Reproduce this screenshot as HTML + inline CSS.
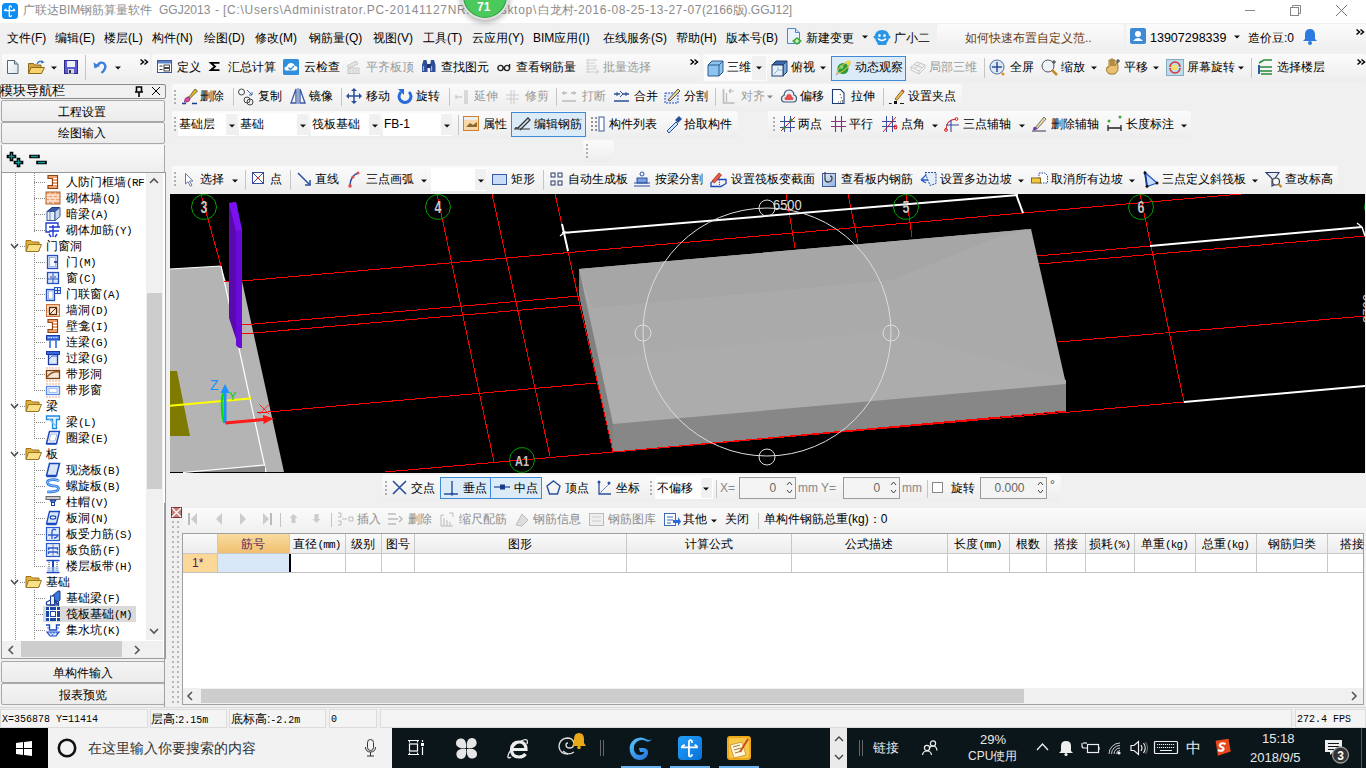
<!DOCTYPE html>
<html><head><meta charset="utf-8">
<style>
*{box-sizing:border-box;margin:0;padding:0}
html,body{width:1366px;height:768px;overflow:hidden;background:#f0f0f0;font-family:"Liberation Sans",sans-serif;font-size:12px;color:#000}
.a{position:absolute;white-space:nowrap}
.t{line-height:17px}
svg{overflow:visible}
</style></head><body>
<div class="a" style="left:0px;top:0px;width:1366px;height:23px;background:#fff"></div>
<svg class="a" style="left:2px;top:3px;" width="16" height="16" viewBox="0 0 16 16"><rect x="0" y="0" width="16" height="16" rx="3.5" fill="#0f8cf0"/><path d="M7.3 13V4.2q0-1.6 1.2-1.4q.9.2.9 1.3M7.3 12.5q0 1.2 1 1.1q.9-.1 1-1M2.5 7.6h10.2M2.5 7.6q.3-1.3 1.6-1.5M12.7 7.6q0-1.2-1.2-1.5" fill="none" stroke="#fff" stroke-width="1.3" stroke-linecap="round"/></svg>
<div class="a t" style="left:23px;top:2px;font-size:12px;color:#8c8c8c;">广联达BIM钢筋算量软件</div>
<div class="a t" style="left:159px;top:2px;font-size:12px;color:#8c8c8c;">GGJ2013</div>
<div class="a t" style="left:215px;top:2px;font-size:12px;color:#8c8c8c;">-</div>
<div class="a t" style="left:223px;top:2px;font-size:12px;color:#8c8c8c;letter-spacing:0.71px">[C:\Users\Administrator.PC-20141127NRHI\Desktop\</div>
<div class="a t" style="left:537.5px;top:2px;font-size:12px;color:#8c8c8c;">白龙村</div>
<div class="a t" style="left:573.5px;top:2px;font-size:12px;color:#8c8c8c;letter-spacing:0.55px">-2016-08-25-13-27-07</div>
<div class="a t" style="left:702px;top:2px;font-size:12px;color:#8c8c8c;">(2166</div>
<div class="a t" style="left:732.5px;top:2px;font-size:12px;color:#8c8c8c;">版</div>
<div class="a t" style="left:743.5px;top:2px;font-size:12px;color:#8c8c8c;">).GGJ12]</div>
<div class="a" style="left:1245px;top:10px;width:10px;height:1px;background:#888"></div>
<svg class="a" style="left:1290px;top:5px;" width="11" height="11" viewBox="0 0 11 11"><rect x="0.5" y="2.5" width="8" height="8" fill="none" stroke="#888"/><path d="M2.5 2.5v-2h8v8h-2" fill="none" stroke="#888"/></svg>
<svg class="a" style="left:1336px;top:5px;" width="11" height="11" viewBox="0 0 11 11"><path d="M0 0L11 11M11 0L0 11" stroke="#777" stroke-width="1"/></svg>
<div class="a" style="left:0px;top:23px;width:1366px;height:30px;background:#f0f0f0"></div>
<div class="a t" style="left:7px;top:30px;font-size:12px;color:#000;">文件(F)</div>
<div class="a t" style="left:55px;top:30px;font-size:12px;color:#000;">编辑(E)</div>
<div class="a t" style="left:104px;top:30px;font-size:12px;color:#000;">楼层(L)</div>
<div class="a t" style="left:152px;top:30px;font-size:12px;color:#000;">构件(N)</div>
<div class="a t" style="left:204px;top:30px;font-size:12px;color:#000;">绘图(D)</div>
<div class="a t" style="left:255px;top:30px;font-size:12px;color:#000;">修改(M)</div>
<div class="a t" style="left:309px;top:30px;font-size:12px;color:#000;">钢筋量(Q)</div>
<div class="a t" style="left:373px;top:30px;font-size:12px;color:#000;">视图(V)</div>
<div class="a t" style="left:423px;top:30px;font-size:12px;color:#000;">工具(T)</div>
<div class="a t" style="left:472px;top:30px;font-size:12px;color:#000;">云应用(Y)</div>
<div class="a t" style="left:533px;top:30px;font-size:12px;color:#000;">BIM应用(I)</div>
<div class="a t" style="left:603px;top:30px;font-size:12px;color:#000;">在线服务(S)</div>
<div class="a t" style="left:676px;top:30px;font-size:12px;color:#000;">帮助(H)</div>
<div class="a t" style="left:726px;top:30px;font-size:12px;color:#000;">版本号(B)</div>
<svg class="a" style="left:787px;top:28px;" width="16" height="17" viewBox="0 0 16 17"><path d="M.5 .5h8l4 4v11H.5z" fill="#eaf3fc" stroke="#4f86c6"/><path d="M8.5 .5v4h4" fill="#cfe0f4" stroke="#4f86c6"/><path d="M10 9l5 4l-5 4l-5-4z" fill="#3fae3a"/><path d="M8 13h4M10 11v4" stroke="#fff" stroke-width="1"/></svg>
<div class="a t" style="left:806px;top:30px;font-size:12px;color:#000;">新建变更</div>
<svg class="a" style="left:862px;top:35px;" width="6" height="4" viewBox="0 0 6 4"><path d="M0 0.5h6L3 3.5z" fill="#111"/></svg>
<svg class="a" style="left:874px;top:29px;" width="16" height="16" viewBox="0 0 16 16"><path d="M8 1q7 0 7 6.5q0 4-2 6l-1 2.5h-8l-1-2.5q-2-2-2-6q0-6.5 7-6.5z" fill="#2a96e8"/><circle cx="1" cy="8" r="1.5" fill="#2a96e8"/><circle cx="15" cy="8" r="1.5" fill="#2a96e8"/><ellipse cx="5.5" cy="6.5" rx="1.2" ry="1.6" fill="#fff"/><ellipse cx="10.5" cy="6.5" rx="1.2" ry="1.6" fill="#fff"/><path d="M4 9.5q4 4 8 0" stroke="#fff" stroke-width="1.5" fill="none"/></svg>
<div class="a t" style="left:894px;top:30px;font-size:12px;color:#000;">广小二</div>
<div class="a" style="left:937px;top:24px;width:187px;height:27px;background:linear-gradient(#fbfbfb,#efefef);border-radius:3px"></div>
<div class="a" style="left:1126px;top:24px;width:240px;height:27px;background:linear-gradient(#fbfbfb,#efefef);border-radius:3px"></div>
<div class="a t" style="left:965px;top:30px;font-size:12px;color:#6a3a10;">如何快速布置自定义范..</div>
<svg class="a" style="left:1130px;top:28px;" width="16" height="16" viewBox="0 0 16 16"><rect x="0" y="0" width="16" height="16" rx="2" fill="#3c8ad8"/><circle cx="8" cy="6" r="3" fill="#fff"/><path d="M3 13q5 -6 10 0z" fill="#fff"/></svg>
<div class="a t" style="left:1150px;top:30px;font-size:12.5px;color:#000;">13907298339</div>
<svg class="a" style="left:1234px;top:35px;" width="6" height="4" viewBox="0 0 6 4"><path d="M0 0.5h6L3 3.5z" fill="#111"/></svg>
<div class="a t" style="left:1248px;top:30px;font-size:12px;color:#000;">造价豆:0</div>
<svg class="a" style="left:1303px;top:28px;" width="14" height="17" viewBox="0 0 14 17"><path d="M7 1c-4 0-5 3-5 6v4l-2 2h14l-2-2V7c0-3-1-6-5-6z" fill="#2b7ae0"/><circle cx="7" cy="15" r="2" fill="#2b7ae0"/></svg>
<svg class="a" style="left:1356px;top:29px;" width="9" height="6" viewBox="0 0 9 6"><path d="M0.5 0.5l3 2.5l-3 2.5M4.5 0.5l3 2.5l-3 2.5" fill="none" stroke="#000" stroke-width="1.5"/></svg>
<div class="a" style="left:461px;top:-28px;width:48px;height:48px;border-radius:50%;background:#4cc95c;border:2px solid #e0e0e0;box-shadow:0 0 0 1px #2f9a40 inset,0 2px 6px rgba(0,0,0,.35)"></div>
<div class="a t" style="left:477px;top:-1px;font-size:12px;color:#fff;font-weight:bold">71</div>
<div class="a" style="left:2px;top:54px;width:148px;height:28px;background:linear-gradient(#fbfbfb,#f3f3f3 60%,#ededed);border-radius:3px"></div>
<div class="a" style="left:152px;top:54px;width:548px;height:28px;background:linear-gradient(#fbfbfb,#f3f3f3 60%,#ededed);border-radius:3px"></div>
<div class="a" style="left:703px;top:54px;width:663px;height:28px;background:linear-gradient(#fbfbfb,#f3f3f3 60%,#ededed);border-radius:3px"></div>
<svg class="a" style="left:7px;top:60px;" width="12" height="14" viewBox="0 0 12 14"><defs><linearGradient id="gd" x1="0" y1="0" x2="1" y2="1"><stop offset="0" stop-color="#fff"/><stop offset="1" stop-color="#dde4ee"/></linearGradient></defs><path d="M.5 .5h7l3.5 3.5v9.5H.5z" fill="url(#gd)" stroke="#56657a"/><path d="M7.5 .5v3.5h3.5" fill="#cfd8e4" stroke="#56657a"/></svg>
<svg class="a" style="left:28px;top:60px;" width="17" height="14" viewBox="0 0 17 14"><path d="M.5 3.5h5l1.5 1.5h6v8.5H.5z" fill="#d9a437" stroke="#8a6a20"/><path d="M3 7.5h13.5l-3 6H.5z" fill="#f8d26a" stroke="#8a6a20"/><path d="M9 4q2-4 6-2" stroke="#3a76c8" fill="none" stroke-width="1.4"/><path d="M13.5 0l3 2.5l-3.5 1z" fill="#3a76c8"/></svg>
<svg class="a" style="left:51px;top:66px;" width="6" height="4" viewBox="0 0 6 4"><path d="M0 0.5h6L3 3.5z" fill="#111"/></svg>
<svg class="a" style="left:64px;top:60px;" width="14" height="14" viewBox="0 0 14 14"><rect x=".5" y=".5" width="13" height="13" fill="#5d5bd0" stroke="#2c2a8a"/><rect x="3" y="1" width="8" height="6" fill="#eef"/><rect x="4" y="9" width="6" height="4.5" fill="#d8d8e8"/><rect x="5" y="10" width="2" height="3" fill="#333"/></svg>
<div class="a" style="left:85px;top:55px;width:1px;height:25px;background:#c5c5c5"></div>
<svg class="a" style="left:93px;top:60px;" width="14" height="13" viewBox="0 0 14 13"><path d="M4.5 5.5q3-4.5 6.5-2q3 3-0.5 7.5l-2 2" stroke="#3f7fd8" stroke-width="2.4" fill="none"/><path d="M0.5 2.5l1 6l5.5-2.5z" fill="#3f7fd8"/></svg>
<svg class="a" style="left:115px;top:66px;" width="6" height="4" viewBox="0 0 6 4"><path d="M0 0.5h6L3 3.5z" fill="#111"/></svg>
<svg class="a" style="left:140px;top:59px;" width="9" height="6" viewBox="0 0 9 6"><path d="M0.5 0.5l3 2.5l-3 2.5M4.5 0.5l3 2.5l-3 2.5" fill="none" stroke="#000" stroke-width="1.5"/></svg>
<div class="a t" style="left:177px;top:59px;font-size:12px;color:#000;">定义</div>
<div class="a t" style="left:228px;top:59px;font-size:12px;color:#000;">汇总计算</div>
<div class="a t" style="left:304px;top:59px;font-size:12px;color:#000;">云检查</div>
<div class="a t" style="left:366px;top:59px;font-size:12px;color:#999;">平齐板顶</div>
<div class="a t" style="left:441px;top:59px;font-size:12px;color:#000;">查找图元</div>
<div class="a t" style="left:516px;top:59px;font-size:12px;color:#000;">查看钢筋量</div>
<div class="a t" style="left:603px;top:59px;font-size:12px;color:#999;">批量选择</div>
<svg class="a" style="left:157px;top:60px;" width="15" height="13" viewBox="0 0 15 13"><rect x=".5" y=".5" width="14" height="12" fill="#fff" stroke="#3c5a9a"/><rect x="1" y="1" width="13" height="2.5" fill="#5b84c8"/><path d="M2.5 6h3M2.5 9.5h3" stroke="#333"/><rect x="7" y="5" width="5.5" height="2.5" fill="none" stroke="#333" stroke-width=".9"/><rect x="7" y="8.5" width="5.5" height="2.5" fill="none" stroke="#333" stroke-width=".9"/></svg>
<svg class="a" style="left:210px;top:62px;" width="10" height="9" viewBox="0 0 10 9"><path d="M9.5 0.8H0.8L5 4.5L0.8 8.2H9.5" fill="none" stroke="#000" stroke-width="1.8"/></svg>
<svg class="a" style="left:283px;top:59px;" width="16" height="16" viewBox="0 0 16 16"><rect x="0" y="0" width="16" height="16" rx="1.5" fill="#2f8fdc"/><path d="M3 11.5q-2-.5-1.5-2.5q.5-2 2.5-1.5q.5-3.5 4-3.5q3 0 3.8 3q2.7 0 2.7 2.3q0 2.2-2.5 2.2z" fill="#fff"/><path d="M5.5 8.5l2 2l3.5-3.5" stroke="#2f8fdc" fill="none" stroke-width="1.3"/></svg>
<svg class="a" style="left:346px;top:60px;" width="15" height="14" viewBox="0 0 15 14"><path d="M1 6l9-5l2 3l-9 4z" fill="#e4e4e4" stroke="#c8c8c8"/><rect x="2" y="8" width="11" height="5.5" fill="#e8e8e8" stroke="#c8c8c8"/><path d="M4 9v4M7 9v4M10 9v4" stroke="#d0d0d0"/></svg>
<svg class="a" style="left:421px;top:59px;" width="16" height="14" viewBox="0 0 16 14"><path d="M1 6l1.5-5h3l1 5v7h-5.5z" fill="#2e4f98"/><path d="M9 6l1-5h3l1.5 5v7h-5.5z" fill="#2e4f98"/><rect x="6" y="5" width="4" height="4" fill="#1c3570"/><path d="M2.5 7v5M10.5 7v5" stroke="#8fb0e8" stroke-width="1.3"/></svg>
<svg class="a" style="left:497px;top:64px;" width="14" height="8" viewBox="0 0 14 8"><circle cx="3.5" cy="4" r="2.6" fill="none" stroke="#222" stroke-width="1.4"/><circle cx="10" cy="4" r="2.6" fill="none" stroke="#222" stroke-width="1.4"/><path d="M6 4h1.5M12.6 4v-4" stroke="#222" stroke-width="1.3"/></svg>
<svg class="a" style="left:585px;top:59px;" width="15" height="16" viewBox="0 0 15 16"><path d="M1 1h11M1 4h9M1 7h11M1 10h9M1 13h11M3 1v13" stroke="#cfcfcf"/><path d="M9 8l5 5l-3 0l1 2" stroke="#cfcfcf" fill="none"/></svg>
<svg class="a" style="left:690px;top:59px;" width="9" height="6" viewBox="0 0 9 6"><path d="M0.5 0.5l3 2.5l-3 2.5M4.5 0.5l3 2.5l-3 2.5" fill="none" stroke="#000" stroke-width="1.5"/></svg>
<div class="a" style="left:704px;top:55px;width:63px;height:26px;background:#fcfcfc"></div>
<div class="a" style="left:752px;top:56px;width:14px;height:24px;background:#f0f0f0"></div>
<svg class="a" style="left:707px;top:60px;" width="17" height="17" viewBox="0 0 17 17"><path d="M1 5l4-4h11v11l-4 4H1z" fill="#8ec3ef" stroke="#2e5c8c"/><path d="M1 5h11v11M12 5l4-4" fill="none" stroke="#2e5c8c"/></svg>
<div class="a t" style="left:727px;top:59px;font-size:12px;color:#000;">三维</div>
<svg class="a" style="left:756px;top:66px;" width="6" height="4" viewBox="0 0 6 4"><path d="M0 0.5h6L3 3.5z" fill="#111"/></svg>
<svg class="a" style="left:771px;top:60px;" width="17" height="17" viewBox="0 0 17 17"><path d="M1 5l4-4h11l-4 4z" fill="#3a68a8" stroke="#1e3e6e"/><path d="M12 5l4-4v11l-4 4z" fill="#7aa8d8" stroke="#1e3e6e"/><rect x="1" y="5" width="11" height="11" fill="#e8f0fa" stroke="#1e3e6e"/><path d="M3 14l4-4v-3M7 10h4" stroke="#8ab0d8" fill="none"/></svg>
<div class="a t" style="left:791px;top:59px;font-size:12px;color:#000;">俯视</div>
<svg class="a" style="left:820px;top:66px;" width="6" height="4" viewBox="0 0 6 4"><path d="M0 0.5h6L3 3.5z" fill="#111"/></svg>
<div class="a" style="left:831px;top:56px;width:75px;height:25px;background:#dcebf8;border:1px solid #3c8ad8"></div>
<svg class="a" style="left:835px;top:59px;" width="17" height="17" viewBox="0 0 17 17"><path d="M1 16L15 2" stroke="#a8a8a8" stroke-width="1.2"/><circle cx="8" cy="9.5" r="5.5" fill="#2a9a3a"/><circle cx="6.5" cy="8" r="2" fill="#8ae08a" opacity=".8"/><ellipse cx="8.5" cy="8.5" rx="8" ry="2.5" transform="rotate(-40 8.5 8.5)" fill="none" stroke="#c8c040" stroke-width="1.2"/><circle cx="13.5" cy="3.5" r="2.2" fill="#e8d84a"/></svg>
<div class="a t" style="left:855px;top:59px;font-size:12px;color:#000;">动态观察</div>
<svg class="a" style="left:910px;top:60px;" width="16" height="15" viewBox="0 0 16 15"><path d="M1 7l6-5l8 3l-6 6z" fill="#f0f0f0" stroke="#c8c8c8"/><path d="M1 7v3l8 4l6-6V5M9 11v3M4 4.5l8 3M11 3l-6 5" stroke="#c8c8c8" fill="none"/></svg>
<div class="a t" style="left:929px;top:59px;font-size:12px;color:#999;">局部三维</div>
<div class="a" style="left:984px;top:58px;width:1px;height:20px;background:#c5c5c5"></div>
<svg class="a" style="left:989px;top:59px;" width="17" height="17" viewBox="0 0 17 17"><circle cx="8" cy="8" r="7" fill="#dfe8f4" stroke="#4a6ea0"/><path d="M8 3v10M3 8h10" stroke="#2a4f9a" stroke-width="1.5"/><circle cx="14" cy="15" r="1.5" fill="#e08a20"/></svg>
<div class="a t" style="left:1010px;top:59px;font-size:12px;color:#000;">全屏</div>
<svg class="a" style="left:1041px;top:59px;" width="17" height="17" viewBox="0 0 17 17"><circle cx="7" cy="7" r="6" fill="#eef3fa" stroke="#555"/><path d="M11 11l5 5" stroke="#c68a2a" stroke-width="2.5"/><path d="M13 1v4M11 3h4" stroke="#333"/></svg>
<div class="a t" style="left:1061px;top:59px;font-size:12px;color:#000;">缩放</div>
<svg class="a" style="left:1091px;top:66px;" width="6" height="4" viewBox="0 0 6 4"><path d="M0 0.5h6L3 3.5z" fill="#111"/></svg>
<svg class="a" style="left:1104px;top:58px;" width="17" height="18" viewBox="0 0 17 18"><path d="M3 9q-2 4 2 7h6q4-3 3-8l-1-4l-2 4V2l-2 0v6V1H7v7V2H5v7z" fill="#e8c070" stroke="#a07a30"/><path d="M12 3h4M14 1v4" stroke="#333"/></svg>
<div class="a t" style="left:1124px;top:59px;font-size:12px;color:#000;">平移</div>
<svg class="a" style="left:1153px;top:66px;" width="6" height="4" viewBox="0 0 6 4"><path d="M0 0.5h6L3 3.5z" fill="#111"/></svg>
<svg class="a" style="left:1166px;top:59px;" width="18" height="17" viewBox="0 0 18 17"><rect x=".5" y=".5" width="17" height="16" fill="#b8dcf0" stroke="#8ab"/><path d="M4 8a5 5 0 0 1 10 0M14 9a5 5 0 0 1 -10 0" stroke="#e03030" fill="none" stroke-width="1.5"/><rect x="6" y="6" width="6" height="5" fill="#f0e070"/></svg>
<div class="a t" style="left:1187px;top:59px;font-size:12px;color:#000;">屏幕旋转</div>
<svg class="a" style="left:1238px;top:66px;" width="6" height="4" viewBox="0 0 6 4"><path d="M0 0.5h6L3 3.5z" fill="#111"/></svg>
<div class="a" style="left:1251px;top:58px;width:1px;height:20px;background:#c5c5c5"></div>
<svg class="a" style="left:1257px;top:59px;" width="16" height="16" viewBox="0 0 16 16"><path d="M2 4l5-3h8M2 8h13M2 12h13M4 15h11" stroke="#2a8a3a" stroke-width="1.5" fill="none"/><path d="M2 6v9" stroke="#2a5aa0" stroke-width="2"/></svg>
<div class="a t" style="left:1277px;top:59px;font-size:12px;color:#000;">选择楼层</div>
<svg class="a" style="left:1357px;top:59px;" width="9" height="6" viewBox="0 0 9 6"><path d="M0.5 0.5l3 2.5l-3 2.5M4.5 0.5l3 2.5l-3 2.5" fill="none" stroke="#000" stroke-width="1.5"/></svg>
<div class="a" style="left:172px;top:84px;width:790px;height:27px;background:linear-gradient(#fbfbfb,#f3f3f3 60%,#ededed);border-radius:3px"></div>
<div class="a" style="left:174px;top:90px;width:2px;height:2px;background:#b0b0b0"></div>
<div class="a" style="left:174px;top:94px;width:2px;height:2px;background:#b0b0b0"></div>
<div class="a" style="left:174px;top:98px;width:2px;height:2px;background:#b0b0b0"></div>
<div class="a" style="left:174px;top:102px;width:2px;height:2px;background:#b0b0b0"></div>
<div class="a t" style="left:200px;top:88px;font-size:12px;color:#000;">删除</div>
<div class="a t" style="left:258px;top:88px;font-size:12px;color:#000;">复制</div>
<div class="a t" style="left:309px;top:88px;font-size:12px;color:#000;">镜像</div>
<div class="a t" style="left:366px;top:88px;font-size:12px;color:#000;">移动</div>
<div class="a t" style="left:416px;top:88px;font-size:12px;color:#000;">旋转</div>
<div class="a t" style="left:474px;top:88px;font-size:12px;color:#9a9a9a;">延伸</div>
<div class="a t" style="left:525px;top:88px;font-size:12px;color:#9a9a9a;">修剪</div>
<div class="a t" style="left:582px;top:88px;font-size:12px;color:#9a9a9a;">打断</div>
<div class="a t" style="left:634px;top:88px;font-size:12px;color:#000;">合并</div>
<div class="a t" style="left:684px;top:88px;font-size:12px;color:#000;">分割</div>
<div class="a t" style="left:741px;top:88px;font-size:12px;color:#9a9a9a;">对齐</div>
<div class="a t" style="left:800px;top:88px;font-size:12px;color:#000;">偏移</div>
<div class="a t" style="left:851px;top:88px;font-size:12px;color:#000;">拉伸</div>
<div class="a t" style="left:908px;top:88px;font-size:12px;color:#000;">设置夹点</div>
<div class="a" style="left:233px;top:88px;width:1px;height:18px;background:#c5c5c5"></div>
<div class="a" style="left:341px;top:88px;width:1px;height:18px;background:#c5c5c5"></div>
<div class="a" style="left:449px;top:88px;width:1px;height:18px;background:#c5c5c5"></div>
<div class="a" style="left:556px;top:88px;width:1px;height:18px;background:#c5c5c5"></div>
<div class="a" style="left:715px;top:88px;width:1px;height:18px;background:#c5c5c5"></div>
<div class="a" style="left:883px;top:88px;width:1px;height:18px;background:#c5c5c5"></div>
<svg class="a" style="left:767px;top:95px;" width="6" height="4" viewBox="0 0 6 4"><path d="M0 0.5h6L3 3.5z" fill="#888"/></svg>
<svg class="a" style="left:181px;top:88px;" width="17" height="17" viewBox="0 0 17 17"><path d="M1 15.5h4M11 15.5h5" stroke="#1a3a8a" stroke-width="1.4"/><path d="M8 9l6-8l2.5 2l-7 7z" fill="#e8b830" stroke="#5a4a20" stroke-width=".8"/><path d="M7 8.5l2.5 2" stroke="#888" stroke-width="2"/><path d="M3.5 13.5q0-4 3.5-4.5l2 2q-.5 3.5-5.5 3z" fill="#d848a8" stroke="#7a2a6a" stroke-width=".8"/></svg>
<svg class="a" style="left:238px;top:88px;" width="16" height="17" viewBox="0 0 16 17"><circle cx="3.5" cy="4" r="3" fill="none" stroke="#444"/><circle cx="9" cy="12" r="3" fill="none" stroke="#444"/><circle cx="12" cy="14" r="3" fill="none" stroke="#444"/><path d="M9 2l5 5M14 4v3h-3" stroke="#3a6ab8" fill="none"/></svg>
<svg class="a" style="left:290px;top:88px;" width="16" height="16" viewBox="0 0 16 16"><path d="M1 15L6 1v14zM15 15L10 1v14z" fill="none" stroke="#3a5aa8" stroke-width="1.3"/><path d="M8 0v16" stroke="#3a5aa8"/></svg>
<svg class="a" style="left:346px;top:88px;" width="16" height="16" viewBox="0 0 16 16"><path d="M8 1v14M1 8h14" stroke="#2a4f9a" stroke-width="1.5"/><path d="M8 0l-3 3h6zM8 16l-3-3h6zM0 8l3-3v6zM16 8l-3-3v6z" fill="#2a4f9a"/></svg>
<svg class="a" style="left:397px;top:88px;" width="15" height="16" viewBox="0 0 15 16"><path d="M4 4a6 6 0 1 0 8 0" stroke="#2a6ad8" stroke-width="3" fill="none"/><path d="M1 1h6v6z" fill="#2a6ad8"/></svg>
<svg class="a" style="left:455px;top:89px;" width="13" height="15" viewBox="0 0 13 15"><path d="M1 8h6M10 1v14M12 1v14" stroke="#bbb"/><path d="M1 6v4" stroke="#bbb"/></svg>
<svg class="a" style="left:506px;top:89px;" width="13" height="15" viewBox="0 0 13 15"><path d="M0 6h13M0 10h13M5 1v14M8 1v14" stroke="#ccc"/></svg>
<svg class="a" style="left:561px;top:89px;" width="16" height="15" viewBox="0 0 16 15"><path d="M1 4h5M10 4h5M1 12h14" stroke="#bbb" stroke-width="1.5"/><path d="M3 2v4M13 2v4" stroke="#bbb"/></svg>
<svg class="a" style="left:613px;top:89px;" width="17" height="15" viewBox="0 0 17 15"><path d="M1 12h15M1 5h6M10 5h6" stroke="#2a4f9a" stroke-width="1.5"/><path d="M4 3v4M13 3v4M7 2l3 3l-3 3" stroke="#2a4f9a" fill="none"/></svg>
<svg class="a" style="left:664px;top:87px;" width="17" height="17" viewBox="0 0 17 17"><rect x="1" y="6" width="13" height="10" fill="#dfe8f8" stroke="#2a4fc8" stroke-dasharray="2 1"/><path d="M4 13l10-11l2 2l-10 10z" fill="#e8d890" stroke="#555"/></svg>
<svg class="a" style="left:722px;top:88px;" width="13" height="16" viewBox="0 0 13 16"><path d="M1.5 1v14h11" stroke="#bbb" stroke-width="1.6" fill="none"/><path d="M4.5 5v9M7 3h5M7 3l2-2M7 3l2 2" stroke="#bbb" stroke-width="1.2" fill="none"/></svg>
<svg class="a" style="left:781px;top:89px;" width="16" height="14" viewBox="0 0 16 14"><path d="M3.5 13q-3 0-3-3.5q0-2.5 2.5-3q.5-5.5 5-5.5q4.5 0 5 5q2.5.5 2.5 3.5q0 3.5-3 3.5z" fill="#e8eef4" stroke="#3a5a7a" stroke-width="1.2"/><path d="M5 11q-1.5 0-1.5-1.5q0-1.5 1.5-1.5q.5-3 3-3q2.5 0 3 3q1.5 0 1.5 1.5q0 1.5-1.5 1.5z" fill="#e05050"/></svg>
<svg class="a" style="left:832px;top:89px;" width="15" height="15" viewBox="0 0 15 15"><path d="M.5 .5h8l3.5 3.5v10.5H.5z" fill="#fff" stroke="#1a3a7a" stroke-width="1.1"/><path d="M8 5l1 2M9 8l1 2M10 11l1 2M6 13h5" stroke="#333" stroke-width="1" stroke-dasharray="1 1"/></svg>
<svg class="a" style="left:888px;top:88px;" width="17" height="17" viewBox="0 0 17 17"><path d="M1 15.5h2.5M12 15.5h4" stroke="#222" stroke-width="1.2"/><rect x="6" y="13" width="3" height="3" fill="#111"/><path d="M7 11l7-9l2 1.8l-7 8.5z" fill="#f0c050" stroke="#6a4a20" stroke-width=".8"/><path d="M14 2l2 1.8" stroke="#d04040" stroke-width="1.6"/></svg>
<div class="a" style="left:172px;top:111px;width:566px;height:27px;background:linear-gradient(#fbfbfb,#f3f3f3 60%,#ededed);border-radius:3px"></div>
<div class="a" style="left:174px;top:117px;width:2px;height:2px;background:#b0b0b0"></div>
<div class="a" style="left:174px;top:121px;width:2px;height:2px;background:#b0b0b0"></div>
<div class="a" style="left:174px;top:125px;width:2px;height:2px;background:#b0b0b0"></div>
<div class="a" style="left:174px;top:129px;width:2px;height:2px;background:#b0b0b0"></div>
<div class="a" style="left:178px;top:113px;width:59px;height:23px;background:#fff"></div>
<div class="a" style="left:226px;top:114px;width:11px;height:21px;background:#f0f0f0"></div>
<svg class="a" style="left:229px;top:124px;" width="6" height="4" viewBox="0 0 6 4"><path d="M0 0.5h6L3 3.5z" fill="#111"/></svg>
<div class="a t" style="left:179px;top:116px;font-size:12px;color:#000;">基础层</div>
<div class="a" style="left:239px;top:113px;width:69px;height:23px;background:#fff"></div>
<div class="a" style="left:297px;top:114px;width:11px;height:21px;background:#f0f0f0"></div>
<svg class="a" style="left:300px;top:124px;" width="6" height="4" viewBox="0 0 6 4"><path d="M0 0.5h6L3 3.5z" fill="#111"/></svg>
<div class="a t" style="left:240px;top:116px;font-size:12px;color:#000;">基础</div>
<div class="a" style="left:311px;top:113px;width:69px;height:23px;background:#fff"></div>
<div class="a" style="left:369px;top:114px;width:11px;height:21px;background:#f0f0f0"></div>
<svg class="a" style="left:372px;top:124px;" width="6" height="4" viewBox="0 0 6 4"><path d="M0 0.5h6L3 3.5z" fill="#111"/></svg>
<div class="a t" style="left:312px;top:116px;font-size:12px;color:#000;">筏板基础</div>
<div class="a" style="left:383px;top:113px;width:69px;height:23px;background:#fff"></div>
<div class="a" style="left:441px;top:114px;width:11px;height:21px;background:#f0f0f0"></div>
<svg class="a" style="left:444px;top:124px;" width="6" height="4" viewBox="0 0 6 4"><path d="M0 0.5h6L3 3.5z" fill="#111"/></svg>
<div class="a t" style="left:384px;top:116px;font-size:12px;color:#000;">FB-1</div>
<div class="a" style="left:458px;top:115px;width:1px;height:20px;background:#c5c5c5"></div>
<svg class="a" style="left:463px;top:116px;" width="16" height="15" viewBox="0 0 16 15"><rect x=".5" y=".5" width="15" height="14" fill="#f8d8a8" stroke="#d08030"/><rect x="1" y="1" width="14" height="3" fill="#eee"/><path d="M3 11l4-4l3 2l4-3v5h-11z" fill="#8a6a2a"/></svg>
<div class="a t" style="left:483px;top:116px;font-size:12px;color:#000;">属性</div>
<div class="a" style="left:511px;top:112px;width:75px;height:25px;background:#dcebf8;border:1px solid #3c8ad8"></div>
<svg class="a" style="left:514px;top:116px;" width="17" height="15" viewBox="0 0 17 15"><path d="M1 12l3 0l10-10l2 2l-10 10" fill="none" stroke="#333" stroke-width="1.3"/><path d="M0 13h16" stroke="#333"/></svg>
<div class="a t" style="left:534px;top:116px;font-size:12px;color:#000;">编辑钢筋</div>
<svg class="a" style="left:590px;top:116px;" width="15" height="16" viewBox="0 0 15 16"><path d="M1 2h2M1 6h2M1 10h2M1 14h2M5 2h2M5 6h2M5 10h2M5 14h2" stroke="#333"/><rect x="9" y="1" width="5" height="14" fill="#fff" stroke="#3a5a9a"/></svg>
<div class="a t" style="left:609px;top:116px;font-size:12px;color:#000;">构件列表</div>
<svg class="a" style="left:666px;top:115px;" width="15" height="17" viewBox="0 0 15 17"><path d="M1 16l9-9l2 2l-9 9z" fill="#c8e0f8" stroke="#2a4f9a"/><path d="M9 5l4-4l3 3l-4 4z" fill="#2a4f9a"/></svg>
<div class="a t" style="left:684px;top:116px;font-size:12px;color:#000;">拾取构件</div>
<div class="a" style="left:768px;top:111px;width:423px;height:27px;background:linear-gradient(#fbfbfb,#f3f3f3 60%,#ededed);border-radius:3px"></div>
<div class="a" style="left:773px;top:117px;width:2px;height:2px;background:#b0b0b0"></div>
<div class="a" style="left:773px;top:121px;width:2px;height:2px;background:#b0b0b0"></div>
<div class="a" style="left:773px;top:125px;width:2px;height:2px;background:#b0b0b0"></div>
<div class="a" style="left:773px;top:129px;width:2px;height:2px;background:#b0b0b0"></div>
<svg class="a" style="left:780px;top:116px;" width="15" height="16" viewBox="0 0 15 16"><path d="M4.5 0v16M10.5 0v16M0 5.5h15M0 11.5h15" stroke="#3a4aa0" stroke-width="1"/><path d="M1 15L15 1" stroke="#e02020" stroke-width="1"/><circle cx="4" cy="12" r="1.6" fill="#3a8a2a"/><circle cx="11" cy="4" r="1.6" fill="#3a8a2a"/></svg>
<div class="a t" style="left:798px;top:116px;font-size:12px;color:#000;">两点</div>
<svg class="a" style="left:831px;top:116px;" width="15" height="16" viewBox="0 0 15 16"><path d="M4.5 0v16M10.5 0v16" stroke="#3a4aa0" stroke-width="1.1"/><path d="M0 5.5h15M0 10.5h15" stroke="#c02a50" stroke-width="1.1"/><path d="M0 5.5h15M0 10.5h15" stroke="#5a3a9a" stroke-width=".5"/></svg>
<div class="a t" style="left:849px;top:116px;font-size:12px;color:#000;">平行</div>
<svg class="a" style="left:882px;top:116px;" width="16" height="16" viewBox="0 0 16 16"><path d="M4.5 0v16M10.5 0v16M0 5.5h14M0 10.5h14" stroke="#3a4aa0" stroke-width="1"/><path d="M1 16L14 1" stroke="#e02020" stroke-width="1"/><ellipse cx="13.5" cy="11" rx="1.3" ry="2" fill="none" stroke="#e02020" stroke-width="1.1"/></svg>
<div class="a t" style="left:901px;top:116px;font-size:12px;color:#000;">点角</div>
<svg class="a" style="left:932px;top:124px;" width="6" height="4" viewBox="0 0 6 4"><path d="M0 0.5h6L3 3.5z" fill="#111"/></svg>
<svg class="a" style="left:944px;top:116px;" width="15" height="16" viewBox="0 0 15 16"><path d="M2 14q0-10 10-11" stroke="#e02020" fill="none" stroke-width="1.1"/><path d="M7 4v12M2 9h13" stroke="#3a4aa0" stroke-width="1.1"/><circle cx="2" cy="14" r="1.4" fill="none" stroke="#e02020"/><circle cx="12.5" cy="3" r="1.4" fill="none" stroke="#e02020"/></svg>
<div class="a t" style="left:963px;top:116px;font-size:12px;color:#000;">三点辅轴</div>
<svg class="a" style="left:1019px;top:124px;" width="6" height="4" viewBox="0 0 6 4"><path d="M0 0.5h6L3 3.5z" fill="#111"/></svg>
<svg class="a" style="left:1031px;top:115px;" width="17" height="17" viewBox="0 0 17 17"><path d="M1 16h14" stroke="#335"/><path d="M4 13l9-11l2 2l-9 10z" fill="#e8d8a0" stroke="#776"/><path d="M2 15q0-4 3-3l1 1q0 3-4 2z" fill="#7040a0"/></svg>
<div class="a t" style="left:1051px;top:116px;font-size:12px;color:#000;">删除辅轴</div>
<svg class="a" style="left:1107px;top:115px;" width="15" height="17" viewBox="0 0 15 17"><circle cx="2" cy="6" r="1.5" fill="#3aaa3a"/><circle cx="13" cy="2" r="1.5" fill="#3aaa3a"/><path d="M1 10v6M14 10v6M1 13h13" stroke="#222" stroke-width="1.3"/></svg>
<div class="a t" style="left:1126px;top:116px;font-size:12px;color:#000;">长度标注</div>
<svg class="a" style="left:1181px;top:124px;" width="6" height="4" viewBox="0 0 6 4"><path d="M0 0.5h6L3 3.5z" fill="#111"/></svg>
<div class="a" style="left:583px;top:140px;width:31px;height:22px;background:linear-gradient(#fbfbfb,#f3f3f3 60%,#ededed);border-radius:3px"></div>
<div class="a" style="left:586px;top:144px;width:2px;height:2px;background:#b0b0b0"></div>
<div class="a" style="left:586px;top:148px;width:2px;height:2px;background:#b0b0b0"></div>
<div class="a" style="left:586px;top:152px;width:2px;height:2px;background:#b0b0b0"></div>
<div class="a" style="left:586px;top:156px;width:2px;height:2px;background:#b0b0b0"></div>
<div class="a" style="left:172px;top:166px;width:1166px;height:27px;background:linear-gradient(#fbfbfb,#f3f3f3 60%,#ededed);border-radius:3px"></div>
<div class="a" style="left:174px;top:172px;width:2px;height:2px;background:#b0b0b0"></div>
<div class="a" style="left:174px;top:176px;width:2px;height:2px;background:#b0b0b0"></div>
<div class="a" style="left:174px;top:180px;width:2px;height:2px;background:#b0b0b0"></div>
<div class="a" style="left:174px;top:184px;width:2px;height:2px;background:#b0b0b0"></div>
<svg class="a" style="left:185px;top:173px;" width="9" height="14" viewBox="0 0 9 14"><path d="M.5 .5v10.5l2.5-2.3l2.3 4.5l1.6-.8l-2.3-4.4h3.4z" fill="#fff" stroke="#5a6a98" stroke-width=".9"/></svg>
<div class="a t" style="left:200px;top:171px;font-size:12px;color:#000;">选择</div>
<svg class="a" style="left:232px;top:179px;" width="6" height="4" viewBox="0 0 6 4"><path d="M0 0.5h6L3 3.5z" fill="#111"/></svg>
<div class="a" style="left:245px;top:170px;width:1px;height:20px;background:#c5c5c5"></div>
<svg class="a" style="left:252px;top:172px;" width="12" height="12" viewBox="0 0 12 12"><rect x=".5" y=".5" width="11" height="11" fill="#fff" stroke="#3a4aa0"/><path d="M1 1l10 10M11 1L1 11" stroke="#3a4aa0"/><circle cx="6" cy="6" r="1.3" fill="#e03030"/></svg>
<div class="a t" style="left:270px;top:171px;font-size:12px;color:#000;">点</div>
<div class="a" style="left:290px;top:170px;width:1px;height:20px;background:#c5c5c5"></div>
<svg class="a" style="left:297px;top:172px;" width="14" height="15" viewBox="0 0 14 15"><path d="M1 1l12 12" stroke="#2a4fa0" stroke-width="1.5"/><path d="M13 8v5h-5" stroke="#2a4fa0" stroke-width="1.5" fill="none"/></svg>
<div class="a t" style="left:315px;top:171px;font-size:12px;color:#000;">直线</div>
<svg class="a" style="left:348px;top:171px;" width="11" height="17" viewBox="0 0 11 17"><path d="M2 15q0-10 8-13" stroke="#2a4fa0" stroke-width="1.5" fill="none"/><circle cx="2" cy="15" r="1.8" fill="#e05050"/><circle cx="5" cy="6" r="1.5" fill="#e05050"/><circle cx="10" cy="2" r="1.5" fill="#e05050"/></svg>
<div class="a t" style="left:366px;top:171px;font-size:12px;color:#000;">三点画弧</div>
<svg class="a" style="left:421px;top:179px;" width="6" height="4" viewBox="0 0 6 4"><path d="M0 0.5h6L3 3.5z" fill="#111"/></svg>
<div class="a" style="left:431px;top:168px;width:55px;height:23px;background:#fff"></div>
<div class="a" style="left:475px;top:169px;width:11px;height:21px;background:#f0f0f0"></div>
<svg class="a" style="left:478px;top:179px;" width="6" height="4" viewBox="0 0 6 4"><path d="M0 0.5h6L3 3.5z" fill="#111"/></svg>
<svg class="a" style="left:492px;top:174px;" width="15" height="11" viewBox="0 0 15 11"><rect x=".5" y=".5" width="14" height="10" fill="#c8dcf8" stroke="#3a5aa0"/></svg>
<div class="a t" style="left:511px;top:171px;font-size:12px;color:#000;">矩形</div>
<div class="a" style="left:543px;top:170px;width:1px;height:20px;background:#c5c5c5"></div>
<svg class="a" style="left:550px;top:172px;" width="13" height="14" viewBox="0 0 13 14"><rect x="1" y="1" width="4" height="4" fill="none" stroke="#2a3a6a"/><rect x="8" y="1" width="4" height="4" fill="none" stroke="#2a3a6a"/><rect x="1" y="9" width="4" height="4" fill="none" stroke="#2a3a6a"/><rect x="8" y="9" width="4" height="4" fill="none" stroke="#2a3a6a"/></svg>
<div class="a t" style="left:568px;top:171px;font-size:12px;color:#000;">自动生成板</div>
<svg class="a" style="left:634px;top:171px;" width="16" height="16" viewBox="0 0 16 16"><rect x="3" y="7" width="10" height="5" fill="#7aa0e0" stroke="#2a4fa0"/><path d="M0 12h16M0 15h16" stroke="#2a4fa0"/><circle cx="8" cy="3" r="2" fill="none" stroke="#2a4fa0"/></svg>
<div class="a t" style="left:655px;top:171px;font-size:12px;color:#000;">按梁分割</div>
<svg class="a" style="left:710px;top:171px;" width="17" height="17" viewBox="0 0 17 17"><path d="M1 15.5h10l5-3V8.5H6L1 11.5z" fill="none" stroke="#1a48c0" stroke-width="1.3"/><path d="M9.5 4v13" stroke="#e02020" stroke-dasharray="1.2 1"/><path d="M2 10l7-8l2.5 2l-7 8z" fill="#e85a4a" stroke="#a02a20" stroke-width=".8"/></svg>
<div class="a t" style="left:731px;top:171px;font-size:12px;color:#000;">设置筏板变截面</div>
<svg class="a" style="left:821px;top:171px;" width="16" height="16" viewBox="0 0 16 16"><defs><linearGradient id="bk" x1="0" y1="0" x2="1" y2="1"><stop offset="0" stop-color="#e8f0fa"/><stop offset="1" stop-color="#8ab0e0"/></linearGradient></defs><rect x="1.5" y="2.5" width="13" height="13" fill="url(#bk)" stroke="#3a5a9a"/><path d="M4 1v7q0 3 3 3q4 0 4-4q0-2-2-2" fill="none" stroke="#444" stroke-width="1.3"/></svg>
<div class="a t" style="left:841px;top:171px;font-size:12px;color:#000;">查看板内钢筋</div>
<svg class="a" style="left:920px;top:171px;" width="17" height="16" viewBox="0 0 17 16"><path d="M5 1.5h11v11l-6 2z" fill="#e4eefa" stroke="#2a4fa0" stroke-dasharray="2 1"/><path d="M1 9l5-5M1 9l5 3M1 9h7" stroke="#2a5ad0" stroke-width="1.3" fill="none"/></svg>
<div class="a t" style="left:940px;top:171px;font-size:12px;color:#000;">设置多边边坡</div>
<svg class="a" style="left:1018px;top:179px;" width="6" height="4" viewBox="0 0 6 4"><path d="M0 0.5h6L3 3.5z" fill="#111"/></svg>
<svg class="a" style="left:1031px;top:172px;" width="17" height="14" viewBox="0 0 17 14"><path d="M8 1h6l2.5 2.5V11H8z" fill="#fff" stroke="#2a4fa0" stroke-dasharray="1.5 1"/><rect x=".5" y="6" width="9" height="5" fill="#f0c840" stroke="#8a6a1a"/></svg>
<div class="a t" style="left:1051px;top:171px;font-size:12px;color:#000;">取消所有边坡</div>
<svg class="a" style="left:1129px;top:179px;" width="6" height="4" viewBox="0 0 6 4"><path d="M0 0.5h6L3 3.5z" fill="#111"/></svg>
<svg class="a" style="left:1143px;top:171px;" width="16" height="17" viewBox="0 0 16 17"><path d="M2 1.5L4 15.5L14 12z" fill="#c8dcf8" stroke="#2a5ad0" stroke-width="1.3"/><path d="M2 1.5L4 15.5" stroke="#1a3a9a" stroke-width="1.8"/><circle cx="2" cy="1.8" r="1.5" fill="#111"/><circle cx="4" cy="15.3" r="1.5" fill="#111"/><circle cx="14" cy="12" r="1.5" fill="#111"/></svg>
<div class="a t" style="left:1162px;top:171px;font-size:12px;color:#000;">三点定义斜筏板</div>
<svg class="a" style="left:1252px;top:179px;" width="6" height="4" viewBox="0 0 6 4"><path d="M0 0.5h6L3 3.5z" fill="#111"/></svg>
<svg class="a" style="left:1265px;top:171px;" width="17" height="17" viewBox="0 0 17 17"><path d="M1 1.5h13l-4 6v6l-3 1.5V7.5z" fill="#e8eef8" stroke="#2a3a6a" stroke-width="1.1"/><circle cx="11" cy="10.5" r="3.5" fill="#f4f8ff" stroke="#444" stroke-width="1.2"/><path d="M13.5 13l3 3" stroke="#c08030" stroke-width="2.2"/></svg>
<div class="a t" style="left:1285px;top:171px;font-size:12px;color:#000;">查改标高</div>
<div class="a" style="left:0px;top:84px;width:166px;height:15px;background:#f0f0f0;border:1px solid #8a8a8a;border-radius:2px"></div>
<div class="a t" style="left:0px;top:83px;font-size:12.5px;color:#000;line-height:16px">模块导航栏</div>
<svg class="a" style="left:135px;top:86px;" width="8" height="11" viewBox="0 0 8 11"><path d="M1.5 1h5v5h-5z M0 6h8 M4 6v5" fill="none" stroke="#000" stroke-width="1.6"/></svg>
<svg class="a" style="left:152px;top:87px;" width="8" height="8" viewBox="0 0 8 8"><path d="M0 0l8 8M8 0l-8 8" stroke="#000" stroke-width="1"/></svg>
<div class="a" style="left:1px;top:100px;width:164px;height:22px;background:linear-gradient(#f4f4f4,#ececec);border:1px solid #a8a8a8;border-radius:2px"></div>
<div class="a t" style="left:58px;top:104px;font-size:12px;color:#000;">工程设置</div>
<div class="a" style="left:1px;top:122px;width:164px;height:22px;background:linear-gradient(#f4f4f4,#ececec);border:1px solid #a8a8a8;border-radius:2px"></div>
<div class="a t" style="left:58px;top:125px;font-size:12px;color:#000;">绘图输入</div>
<div class="a" style="left:1px;top:145px;width:164px;height:28px;background:linear-gradient(#fafafa,#ededed);border-left:1px solid #a8a8a8;border-right:1px solid #a8a8a8"></div>
<svg class="a" style="left:0px;top:0px;" width="50" height="170" viewBox="0 0 50 170"><path d="M8.5 156.5h6M11.5 153.5v6M15.5 162.5h6M18.5 159.5v6M31 156.5h7M38 162.5h7" stroke="#000" stroke-width="3.6" stroke-linecap="square"/><path d="M8.5 156.5h6M11.5 153.5v6M15.5 162.5h6M18.5 159.5v6M31 156.5h7M38 162.5h7" stroke="#0a9a9a" stroke-width="1.3" stroke-linecap="butt"/></svg>
<div class="a" style="left:1px;top:172px;width:165px;height:487px;background:#fff;border:1px solid #9a9a9a"></div>
<div class="a" style="left:146px;top:173px;width:17px;height:467px;background:#f0f0f0"></div>
<div class="a" style="left:147px;top:293px;width:15px;height:196px;background:#cdcdcd"></div>
<svg class="a" style="left:149px;top:178px;" width="10" height="6" viewBox="0 0 10 6"><path d="M1 5l4-4l4 4" stroke="#555" stroke-width="1.6" fill="none"/></svg>
<svg class="a" style="left:149px;top:628px;" width="10" height="6" viewBox="0 0 10 6"><path d="M1 1l4 4l4-4" stroke="#555" stroke-width="1.6" fill="none"/></svg>
<div class="a" style="left:2px;top:641px;width:161px;height:17px;background:#f0f0f0"></div>
<div class="a" style="left:21px;top:641px;width:101px;height:16px;background:#cdcdcd"></div>
<svg class="a" style="left:8px;top:645px;" width="6" height="10" viewBox="0 0 6 10"><path d="M5 1l-4 4l4 4" stroke="#555" stroke-width="1.6" fill="none"/></svg>
<svg class="a" style="left:134px;top:645px;" width="6" height="10" viewBox="0 0 6 10"><path d="M1 1l4 4l-4 4" stroke="#555" stroke-width="1.6" fill="none"/></svg>
<div class="a" style="left:15px;top:173px;width:1px;height:467px;background-image:linear-gradient(#888 50%,transparent 50%);background-size:1px 2px"></div>
<div class="a" style="left:34px;top:182px;width:11px;height:1px;background-image:linear-gradient(90deg,#888 50%,transparent 50%);background-size:2px 1px"></div>
<svg class="a" style="left:45px;top:174px;" width="16" height="16" viewBox="0 0 16 16"><path d="M3 1.5h9.5v13H3v-3h4.5v-7H3z" fill="#f2a46e" stroke="#8a4412" stroke-width="1.2"/><path d="M8 4.5h4M8 7.5h4M8 10.5h4M4 2.5v0" stroke="#fff" stroke-width="1"/></svg>
<div class="a t" style="left:66px;top:174px;font-size:12px;color:#000;">人防门框墙<span style="font-family:Liberation Mono;font-size:11px;letter-spacing:-0.6px">(RF</span></div>
<div class="a" style="left:34px;top:198px;width:11px;height:1px;background-image:linear-gradient(90deg,#888 50%,transparent 50%);background-size:2px 1px"></div>
<svg class="a" style="left:45px;top:190px;" width="16" height="16" viewBox="0 0 16 16"><rect x="1" y="2" width="14" height="12" fill="#f2a46e" stroke="#b0602a"/><path d="M1.5 5h13M1.5 8h13M1.5 11h13" stroke="#fff"/><path d="M5 2.5v2.5M10 2.5v2.5M3 5v3M8 5v3M13 5v3M5 8v3M10 8v3M3 11v3M8 11v3" stroke="#fff" stroke-width=".8"/></svg>
<div class="a t" style="left:66px;top:190px;font-size:12px;color:#000;">砌体墙<span style="font-family:Liberation Mono;font-size:11px;letter-spacing:-0.6px">(Q)</span></div>
<div class="a" style="left:34px;top:214px;width:11px;height:1px;background-image:linear-gradient(90deg,#888 50%,transparent 50%);background-size:2px 1px"></div>
<svg class="a" style="left:45px;top:206px;" width="16" height="16" viewBox="0 0 16 16"><path d="M2 5.5l5-4h8l-5 4z" fill="#3a5aa8" stroke="#1e3a7a"/><rect x="2" y="5.5" width="8" height="9" fill="#e6eef8" stroke="#3a5a9a"/><path d="M10 5.5l5-4v9l-5 4z" fill="#c8d8f0" stroke="#3a5a9a"/><path d="M5 5.5v9" stroke="#3a5a9a" stroke-width=".7"/></svg>
<div class="a t" style="left:66px;top:206px;font-size:12px;color:#000;">暗梁<span style="font-family:Liberation Mono;font-size:11px;letter-spacing:-0.6px">(A)</span></div>
<div class="a" style="left:34px;top:230px;width:11px;height:1px;background-image:linear-gradient(90deg,#888 50%,transparent 50%);background-size:2px 1px"></div>
<svg class="a" style="left:45px;top:222px;" width="16" height="16" viewBox="0 0 16 16"><path d="M1 3V1h12v4M1 3v7h4" fill="none" stroke="#1a3ad0" stroke-width="1.3"/><path d="M4 5h11M4 9h10M8 3v12M4 12l2 3M12 12l-2 3" stroke="#1a3ad0" stroke-width="1.4" fill="none"/></svg>
<div class="a t" style="left:66px;top:222px;font-size:12px;color:#000;">砌体加筋<span style="font-family:Liberation Mono;font-size:11px;letter-spacing:-0.6px">(Y)</span></div>
<svg class="a" style="left:10px;top:243px;" width="9" height="6" viewBox="0 0 9 6"><path d="M1 1l3.5 4l3.5-4" stroke="#444" stroke-width="1.4" fill="none"/></svg>
<div class="a" style="left:20px;top:246px;width:5px;height:1px;background-image:linear-gradient(90deg,#888 50%,transparent 50%);background-size:2px 1px"></div>
<svg class="a" style="left:25px;top:239px;" width="17" height="13" viewBox="0 0 17 13"><path d="M1 1.5h5l1.5 1.5h6.5v9H1z" fill="#e2b03c" stroke="#9a7420"/><path d="M3.5 5.5h13l-3 7H1z" fill="#fbe08a" stroke="#9a7420"/></svg>
<div class="a t" style="left:46px;top:238px;font-size:12px;color:#000;">门窗洞</div>
<div class="a" style="left:34px;top:262px;width:11px;height:1px;background-image:linear-gradient(90deg,#888 50%,transparent 50%);background-size:2px 1px"></div>
<svg class="a" style="left:45px;top:254px;" width="16" height="16" viewBox="0 0 16 16"><rect x="2.5" y="1.5" width="10" height="13" fill="#dce8fa" stroke="#2450c0" stroke-width="1.3"/><rect x="4.5" y="3.5" width="6" height="9" fill="#f4f8ff" stroke="#8aa8e0" stroke-width=".8"/><path d="M9 8h3" stroke="#102a80" stroke-width="1.5"/></svg>
<div class="a t" style="left:66px;top:254px;font-size:12px;color:#000;">门<span style="font-family:Liberation Mono;font-size:11px;letter-spacing:-0.6px">(M)</span></div>
<div class="a" style="left:34px;top:278px;width:11px;height:1px;background-image:linear-gradient(90deg,#888 50%,transparent 50%);background-size:2px 1px"></div>
<svg class="a" style="left:45px;top:270px;" width="16" height="16" viewBox="0 0 16 16"><rect x="2.5" y="2.5" width="11" height="11" fill="#dce8fa" stroke="#2450c0" stroke-width="1.3"/><path d="M8 2.5v11M2.5 9h11" stroke="#2450c0"/><circle cx="6" cy="7" r=".8" fill="#102a80"/><circle cx="10" cy="7" r=".8" fill="#102a80"/></svg>
<div class="a t" style="left:66px;top:270px;font-size:12px;color:#000;">窗<span style="font-family:Liberation Mono;font-size:11px;letter-spacing:-0.6px">(C)</span></div>
<div class="a" style="left:34px;top:294px;width:11px;height:1px;background-image:linear-gradient(90deg,#888 50%,transparent 50%);background-size:2px 1px"></div>
<svg class="a" style="left:45px;top:286px;" width="16" height="16" viewBox="0 0 16 16"><rect x="1.5" y="3.5" width="8" height="11" fill="#dce8fa" stroke="#2450c0" stroke-width="1.3"/><rect x="3.5" y="5" width="4.5" height="8" fill="#fff" stroke="#8aa8e0" stroke-width=".8"/><rect x="9.5" y="1.5" width="6" height="6" fill="#dce8fa" stroke="#2450c0"/><path d="M12.5 1.5v6M9.5 4.5h6" stroke="#2450c0"/></svg>
<div class="a t" style="left:66px;top:286px;font-size:12px;color:#000;">门联窗<span style="font-family:Liberation Mono;font-size:11px;letter-spacing:-0.6px">(A)</span></div>
<div class="a" style="left:34px;top:310px;width:11px;height:1px;background-image:linear-gradient(90deg,#888 50%,transparent 50%);background-size:2px 1px"></div>
<svg class="a" style="left:45px;top:302px;" width="16" height="16" viewBox="0 0 16 16"><rect x="1.5" y="2.5" width="13" height="12" fill="#f8c8a0" stroke="#c87040"/><path d="M2 5.5h12M2 11.5h12" stroke="#fff"/><rect x="4.5" y="5.5" width="7" height="7" fill="#fbeee0" stroke="#5a2a08" stroke-width="1.2"/><path d="M5 12l6-6" stroke="#5a2a08"/></svg>
<div class="a t" style="left:66px;top:302px;font-size:12px;color:#000;">墙洞<span style="font-family:Liberation Mono;font-size:11px;letter-spacing:-0.6px">(D)</span></div>
<div class="a" style="left:34px;top:326px;width:11px;height:1px;background-image:linear-gradient(90deg,#888 50%,transparent 50%);background-size:2px 1px"></div>
<svg class="a" style="left:45px;top:318px;" width="16" height="16" viewBox="0 0 16 16"><path d="M3 1.5h9.5v13H3v-3h4.5v-7H3z" fill="#f2a46e" stroke="#8a4412" stroke-width="1.2"/><path d="M8 4.5h4M8 7.5h4M8 10.5h4M4 2.5v0" stroke="#fff" stroke-width="1"/></svg>
<div class="a t" style="left:66px;top:318px;font-size:12px;color:#000;">壁龛<span style="font-family:Liberation Mono;font-size:11px;letter-spacing:-0.6px">(I)</span></div>
<div class="a" style="left:34px;top:342px;width:11px;height:1px;background-image:linear-gradient(90deg,#888 50%,transparent 50%);background-size:2px 1px"></div>
<svg class="a" style="left:45px;top:334px;" width="16" height="16" viewBox="0 0 16 16"><rect x="1.5" y="1.5" width="13" height="4.5" fill="#4a7ae8" stroke="#1a3aa8"/><path d="M3 3.5h10" stroke="#c8d8ff" stroke-dasharray="1.5 1"/><path d="M5 6v8M11 6v8" stroke="#5a8ae8" stroke-width="2"/></svg>
<div class="a t" style="left:66px;top:334px;font-size:12px;color:#000;">连梁<span style="font-family:Liberation Mono;font-size:11px;letter-spacing:-0.6px">(G)</span></div>
<div class="a" style="left:34px;top:358px;width:11px;height:1px;background-image:linear-gradient(90deg,#888 50%,transparent 50%);background-size:2px 1px"></div>
<svg class="a" style="left:45px;top:350px;" width="16" height="16" viewBox="0 0 16 16"><rect x="1.5" y="1.5" width="13" height="3" fill="#3a6ae0" stroke="#1a3aa8"/><rect x="3.5" y="4.5" width="9" height="10" fill="#dce8fa" stroke="#1a3aa8" stroke-width="1.3"/><path d="M4 9l3-3h5" stroke="#3a6ae0" fill="none"/></svg>
<div class="a t" style="left:66px;top:350px;font-size:12px;color:#000;">过梁<span style="font-family:Liberation Mono;font-size:11px;letter-spacing:-0.6px">(G)</span></div>
<div class="a" style="left:34px;top:374px;width:11px;height:1px;background-image:linear-gradient(90deg,#888 50%,transparent 50%);background-size:2px 1px"></div>
<svg class="a" style="left:45px;top:366px;" width="16" height="16" viewBox="0 0 16 16"><path d="M1 2h14M1 15h14" stroke="#f0a080" stroke-dasharray="2 1"/><rect x="1.5" y="4.5" width="13" height="8" fill="#f6e4d4" stroke="#7a4010" stroke-width="1.3"/><path d="M2 11q5-6 12-5" stroke="#9a5a28" stroke-width="1.5" fill="none"/></svg>
<div class="a t" style="left:66px;top:366px;font-size:12px;color:#000;">带形洞</div>
<div class="a" style="left:34px;top:390px;width:11px;height:1px;background-image:linear-gradient(90deg,#888 50%,transparent 50%);background-size:2px 1px"></div>
<svg class="a" style="left:45px;top:382px;" width="16" height="16" viewBox="0 0 16 16"><path d="M1 2h14M1 15h14" stroke="#f0a080" stroke-dasharray="2 1"/><rect x="1.5" y="4.5" width="13" height="8" fill="#e8f0ff" stroke="#5a8ae8" stroke-width="1.3"/><rect x="4" y="6.5" width="8" height="4" fill="#fff" stroke="#8ab0f0" stroke-width=".8"/></svg>
<div class="a t" style="left:66px;top:382px;font-size:12px;color:#000;">带形窗</div>
<svg class="a" style="left:10px;top:403px;" width="9" height="6" viewBox="0 0 9 6"><path d="M1 1l3.5 4l3.5-4" stroke="#444" stroke-width="1.4" fill="none"/></svg>
<div class="a" style="left:20px;top:406px;width:5px;height:1px;background-image:linear-gradient(90deg,#888 50%,transparent 50%);background-size:2px 1px"></div>
<svg class="a" style="left:25px;top:399px;" width="17" height="13" viewBox="0 0 17 13"><path d="M1 1.5h5l1.5 1.5h6.5v9H1z" fill="#e2b03c" stroke="#9a7420"/><path d="M3.5 5.5h13l-3 7H1z" fill="#fbe08a" stroke="#9a7420"/></svg>
<div class="a t" style="left:46px;top:398px;font-size:12px;color:#000;">梁</div>
<div class="a" style="left:34px;top:422px;width:11px;height:1px;background-image:linear-gradient(90deg,#888 50%,transparent 50%);background-size:2px 1px"></div>
<svg class="a" style="left:45px;top:414px;" width="16" height="16" viewBox="0 0 16 16"><path d="M1.5 2h13v3.5h-3v9h-4v-9h-6z" fill="#e4f0fc" stroke="#1a8ae0" stroke-width="1.3"/><path d="M4 5l4 4M8 9l3 3" stroke="#8ac0f0" stroke-width="1.5"/></svg>
<div class="a t" style="left:66px;top:414px;font-size:12px;color:#000;">梁<span style="font-family:Liberation Mono;font-size:11px;letter-spacing:-0.6px">(L)</span></div>
<div class="a" style="left:34px;top:438px;width:11px;height:1px;background-image:linear-gradient(90deg,#888 50%,transparent 50%);background-size:2px 1px"></div>
<svg class="a" style="left:45px;top:430px;" width="16" height="16" viewBox="0 0 16 16"><path d="M4.5 1.5h10l-3 12H1.5z" fill="#fff" stroke="#1a48c0" stroke-width="1.5"/><path d="M6 4h6l-2 7H4z" fill="none" stroke="#8aa8e0" stroke-width=".8"/><path d="M1.5 14h10" stroke="#1a48c0" stroke-width="1.5"/></svg>
<div class="a t" style="left:66px;top:430px;font-size:12px;color:#000;">圈梁<span style="font-family:Liberation Mono;font-size:11px;letter-spacing:-0.6px">(E)</span></div>
<svg class="a" style="left:10px;top:451px;" width="9" height="6" viewBox="0 0 9 6"><path d="M1 1l3.5 4l3.5-4" stroke="#444" stroke-width="1.4" fill="none"/></svg>
<div class="a" style="left:20px;top:454px;width:5px;height:1px;background-image:linear-gradient(90deg,#888 50%,transparent 50%);background-size:2px 1px"></div>
<svg class="a" style="left:25px;top:447px;" width="17" height="13" viewBox="0 0 17 13"><path d="M1 1.5h5l1.5 1.5h6.5v9H1z" fill="#e2b03c" stroke="#9a7420"/><path d="M3.5 5.5h13l-3 7H1z" fill="#fbe08a" stroke="#9a7420"/></svg>
<div class="a t" style="left:46px;top:446px;font-size:12px;color:#000;">板</div>
<div class="a" style="left:34px;top:470px;width:11px;height:1px;background-image:linear-gradient(90deg,#888 50%,transparent 50%);background-size:2px 1px"></div>
<svg class="a" style="left:45px;top:462px;" width="16" height="16" viewBox="0 0 16 16"><path d="M4.5 1.5h10l-3 12H1.5z" fill="#d8e6fa" stroke="#1a48c0" stroke-width="1.5"/><path d="M1.5 14.5h10" stroke="#1a48c0" stroke-width="1.5"/></svg>
<div class="a t" style="left:66px;top:462px;font-size:12px;color:#000;">现浇板<span style="font-family:Liberation Mono;font-size:11px;letter-spacing:-0.6px">(B)</span></div>
<div class="a" style="left:34px;top:486px;width:11px;height:1px;background-image:linear-gradient(90deg,#888 50%,transparent 50%);background-size:2px 1px"></div>
<svg class="a" style="left:45px;top:478px;" width="16" height="16" viewBox="0 0 16 16"><path d="M14 3q-3-2-9-1q-4 1-2 4q2 2 7 2q5 1 3 4q-2 2-11 2" fill="none" stroke="#1a70e0" stroke-width="2.6"/><path d="M14 3q-3-2-9-1q-4 1-2 4q2 2 7 2q5 1 3 4q-2 2-11 2" fill="none" stroke="#a8d0fa" stroke-width=".9"/></svg>
<div class="a t" style="left:66px;top:478px;font-size:12px;color:#000;">螺旋板<span style="font-family:Liberation Mono;font-size:11px;letter-spacing:-0.6px">(B)</span></div>
<div class="a" style="left:34px;top:502px;width:11px;height:1px;background-image:linear-gradient(90deg,#888 50%,transparent 50%);background-size:2px 1px"></div>
<svg class="a" style="left:45px;top:494px;" width="16" height="16" viewBox="0 0 16 16"><rect x="1" y="2.5" width="14" height="3" fill="#c8c8c8" stroke="#6a6a6a"/><path d="M5 6h6l-1.5 2.5h-3z" fill="#4a7ae0" stroke="#1a3aa0"/><rect x="6.5" y="8.5" width="3" height="3" fill="#fff" stroke="#1a3aa0"/></svg>
<div class="a t" style="left:66px;top:494px;font-size:12px;color:#000;">柱帽<span style="font-family:Liberation Mono;font-size:11px;letter-spacing:-0.6px">(V)</span></div>
<div class="a" style="left:34px;top:518px;width:11px;height:1px;background-image:linear-gradient(90deg,#888 50%,transparent 50%);background-size:2px 1px"></div>
<svg class="a" style="left:45px;top:510px;" width="16" height="16" viewBox="0 0 16 16"><path d="M4.5 1.5h10l-3 12H1.5z" fill="#d8e6fa" stroke="#1a48c0" stroke-width="1.3"/><ellipse cx="8" cy="7.5" rx="2.8" ry="1.6" fill="#fff" stroke="#1a48c0" stroke-width="1.2"/><path d="M1.5 14.5h10" stroke="#1a48c0" stroke-width="1.5"/></svg>
<div class="a t" style="left:66px;top:510px;font-size:12px;color:#000;">板洞<span style="font-family:Liberation Mono;font-size:11px;letter-spacing:-0.6px">(N)</span></div>
<div class="a" style="left:34px;top:534px;width:11px;height:1px;background-image:linear-gradient(90deg,#888 50%,transparent 50%);background-size:2px 1px"></div>
<svg class="a" style="left:45px;top:526px;" width="16" height="16" viewBox="0 0 16 16"><rect x="1.5" y="1.5" width="13" height="13" fill="#e0ecfc" stroke="#2a5ad0" stroke-width="1.2"/><path d="M11 4q-3-2-4 1v8M3 9h10q-1 3-4 3" fill="none" stroke="#2a5ad0" stroke-width="1.3"/></svg>
<div class="a t" style="left:66px;top:526px;font-size:12px;color:#000;">板受力筋<span style="font-family:Liberation Mono;font-size:11px;letter-spacing:-0.6px">(S)</span></div>
<div class="a" style="left:34px;top:550px;width:11px;height:1px;background-image:linear-gradient(90deg,#888 50%,transparent 50%);background-size:2px 1px"></div>
<svg class="a" style="left:45px;top:542px;" width="16" height="16" viewBox="0 0 16 16"><rect x="1.5" y="1.5" width="13" height="13" fill="#e0ecfc" stroke="#2a5ad0" stroke-width="1.2"/><path d="M8 2v12" stroke="#a0a8b8" stroke-width="1.5"/><path d="M3.5 8V6h9v2M3.5 12v-2h9v2" fill="none" stroke="#2a5ad0" stroke-width="1.3"/></svg>
<div class="a t" style="left:66px;top:542px;font-size:12px;color:#000;">板负筋<span style="font-family:Liberation Mono;font-size:11px;letter-spacing:-0.6px">(F)</span></div>
<div class="a" style="left:34px;top:566px;width:11px;height:1px;background-image:linear-gradient(90deg,#888 50%,transparent 50%);background-size:2px 1px"></div>
<svg class="a" style="left:45px;top:558px;" width="16" height="16" viewBox="0 0 16 16"><path d="M1.5 2.5h13M1.5 14.5h13" stroke="#1a48c0" stroke-width="1.6"/><path d="M8 3v11" stroke="#1a48c0" stroke-width="2"/><path d="M4 4v10M12 4v10" stroke="#333" stroke-dasharray="1 1"/><rect x="2" y="9" width="12" height="5" fill="#a8c8f0" opacity=".6"/></svg>
<div class="a t" style="left:66px;top:558px;font-size:12px;color:#000;">楼层板带<span style="font-family:Liberation Mono;font-size:11px;letter-spacing:-0.6px">(H)</span></div>
<svg class="a" style="left:10px;top:579px;" width="9" height="6" viewBox="0 0 9 6"><path d="M1 1l3.5 4l3.5-4" stroke="#444" stroke-width="1.4" fill="none"/></svg>
<div class="a" style="left:20px;top:582px;width:5px;height:1px;background-image:linear-gradient(90deg,#888 50%,transparent 50%);background-size:2px 1px"></div>
<svg class="a" style="left:25px;top:575px;" width="17" height="13" viewBox="0 0 17 13"><path d="M1 1.5h5l1.5 1.5h6.5v9H1z" fill="#e2b03c" stroke="#9a7420"/><path d="M3.5 5.5h13l-3 7H1z" fill="#fbe08a" stroke="#9a7420"/></svg>
<div class="a t" style="left:46px;top:574px;font-size:12px;color:#000;">基础</div>
<div class="a" style="left:34px;top:598px;width:11px;height:1px;background-image:linear-gradient(90deg,#888 50%,transparent 50%);background-size:2px 1px"></div>
<svg class="a" style="left:45px;top:590px;" width="16" height="16" viewBox="0 0 16 16"><path d="M7 6l6-5h2v9l-4 4z" fill="#3a78d8" stroke="#1a3a90"/><rect x="5.5" y="6" width="4" height="9" fill="#e6eef8" stroke="#1a3a90"/><path d="M1.5 15v-3l4-2M9.5 10l4 2v3z" fill="#fff" stroke="#1a3a90" stroke-width="1.2"/><path d="M1.5 15h12" stroke="#1a3a90" stroke-width="1.4"/></svg>
<div class="a t" style="left:66px;top:590px;font-size:12px;color:#000;">基础梁<span style="font-family:Liberation Mono;font-size:11px;letter-spacing:-0.6px">(F)</span></div>
<div class="a" style="left:34px;top:614px;width:11px;height:1px;background-image:linear-gradient(90deg,#888 50%,transparent 50%);background-size:2px 1px"></div>
<div class="a" style="left:43px;top:606px;width:93px;height:16px;background:#dadada"></div>
<svg class="a" style="left:45px;top:606px;" width="16" height="16" viewBox="0 0 16 16"><rect x="1" y="1" width="14" height="14" fill="#1a48a8"/><path d="M1 4.5h14M1 11.5h14M4.5 1v14M11.5 1v14" stroke="#fff" stroke-width="1"/><rect x="6" y="6" width="4" height="4" fill="#fff"/></svg>
<div class="a t" style="left:66px;top:606px;font-size:12px;color:#000;">筏板基础<span style="font-family:Liberation Mono;font-size:11px;letter-spacing:-0.6px">(M)</span></div>
<div class="a" style="left:34px;top:630px;width:11px;height:1px;background-image:linear-gradient(90deg,#888 50%,transparent 50%);background-size:2px 1px"></div>
<svg class="a" style="left:45px;top:622px;" width="16" height="16" viewBox="0 0 16 16"><path d="M1 3h3.5v5h7V3H15" fill="none" stroke="#1a48c8" stroke-width="1.4"/><path d="M2 10h12l-3 4H5z" fill="#dce8fa" stroke="#1a48c8" stroke-width="1.2"/><path d="M3 6h.01M13 6h.01M6 11h.01M9 11h.01M12 11h.01M7.5 13h.01" stroke="#1a48c8" stroke-width="1.4" stroke-linecap="round"/></svg>
<div class="a t" style="left:66px;top:622px;font-size:12px;color:#000;">集水坑<span style="font-family:Liberation Mono;font-size:11px;letter-spacing:-0.6px">(K)</span></div>
<div class="a" style="left:34px;top:173px;width:1px;height:59px;background-image:linear-gradient(#888 50%,transparent 50%);background-size:1px 2px"></div>
<div class="a" style="left:34px;top:254px;width:1px;height:138px;background-image:linear-gradient(#888 50%,transparent 50%);background-size:1px 2px"></div>
<div class="a" style="left:34px;top:414px;width:1px;height:26px;background-image:linear-gradient(#888 50%,transparent 50%);background-size:1px 2px"></div>
<div class="a" style="left:34px;top:462px;width:1px;height:106px;background-image:linear-gradient(#888 50%,transparent 50%);background-size:1px 2px"></div>
<div class="a" style="left:34px;top:590px;width:1px;height:50px;background-image:linear-gradient(#888 50%,transparent 50%);background-size:1px 2px"></div>
<div class="a" style="left:1px;top:661px;width:164px;height:22px;background:linear-gradient(#f4f4f4,#ececec);border:1px solid #a8a8a8;border-radius:2px"></div>
<div class="a t" style="left:53px;top:665px;font-size:12px;color:#000;">单构件输入</div>
<div class="a" style="left:1px;top:683px;width:164px;height:22px;background:linear-gradient(#f4f4f4,#ececec);border:1px solid #a8a8a8;border-radius:2px"></div>
<div class="a t" style="left:59px;top:687px;font-size:12px;color:#000;">报表预览</div>
<svg class="a" style="left:170px;top:194px;overflow:hidden;background:#000" width="1195" height="279" viewBox="170 194 1195 279"><polygon points="170,269 221,266 226,282 242,281 284,472 170,472" fill="#b4b4b4" /><line x1="170" y1="269" x2="221" y2="266" stroke="#fff" stroke-width="1.2"/><line x1="221" y1="266" x2="266" y2="472" stroke="#fff" stroke-width="1.2"/><polygon points="195,472 265,466 265,472" fill="#8c8c8c" /><line x1="183" y1="472.5" x2="264" y2="465" stroke="#fff" stroke-width="1.2"/><polygon points="170,371 177,371 190,436 170,436" fill="#7f7a00" /><line x1="201" y1="194" x2="221" y2="266" stroke="#ff0000" stroke-width="1" shape-rendering="crispEdges"/><line x1="224" y1="282" x2="242" y2="281" stroke="#ff0000" stroke-width="1" shape-rendering="crispEdges"/><polygon points="229,203 236,202 236,345 239,348 229,318" fill="#5a0aac" /><polygon points="236,202 242,230 242,348 239,348 236,345" fill="#6a0ad8" /><polygon points="229,203 236,202 242,230 236,231" fill="#7a12f0" /><polygon points="579,269 1031,229 1066,384 1066,411 613,452 579,294" fill="#aaaaaa" /><polygon points="579,269 1031,229 1000,236 892,280 592,308" fill="#a6a6a6" /><polygon points="597,358 892,331 1066,380 1066,384 613,424" fill="#acacac" /><polygon points="613,424 1066,384 1066,411 613,452" fill="#878787" /><polygon points="579,269 613,424 613,452 579,294" fill="#808080" /><line x1="242" y1="281" x2="1241" y2="194" stroke="#ff0000" stroke-width="1" shape-rendering="crispEdges"/><line x1="242" y1="325" x2="580" y2="296" stroke="#ff0000" stroke-width="1" shape-rendering="crispEdges"/><line x1="1037" y1="256" x2="1150" y2="246" stroke="#ff0000" stroke-width="1" shape-rendering="crispEdges"/><line x1="242" y1="334" x2="580" y2="305" stroke="#ff0000" stroke-width="1" shape-rendering="crispEdges"/><line x1="1039" y1="264" x2="1366" y2="236" stroke="#ff0000" stroke-width="1" shape-rendering="crispEdges"/><line x1="257" y1="413" x2="596" y2="383" stroke="#ff0000" stroke-width="1" shape-rendering="crispEdges"/><line x1="1058" y1="342" x2="1366" y2="316" stroke="#ff0000" stroke-width="1" shape-rendering="crispEdges"/><line x1="385" y1="472" x2="1184" y2="402" stroke="#ff0000" stroke-width="1" shape-rendering="crispEdges"/><line x1="437" y1="194" x2="494" y2="462" stroke="#ff0000" stroke-width="1" shape-rendering="crispEdges"/><line x1="492" y1="194" x2="550" y2="456" stroke="#ff0000" stroke-width="1" shape-rendering="crispEdges"/><line x1="555" y1="194" x2="613" y2="452" stroke="#ff0000" stroke-width="1" shape-rendering="crispEdges"/><line x1="786" y1="194" x2="795" y2="248" stroke="#ff0000" stroke-width="1" shape-rendering="crispEdges"/><line x1="848" y1="194" x2="858" y2="243" stroke="#ff0000" stroke-width="1" shape-rendering="crispEdges"/><line x1="906" y1="194" x2="912" y2="237" stroke="#ff0000" stroke-width="1" shape-rendering="crispEdges"/><line x1="1140" y1="194" x2="1184" y2="402" stroke="#ff0000" stroke-width="1" shape-rendering="crispEdges"/><line x1="1066" y1="411" x2="613" y2="452" stroke="#ff0000" stroke-width="1" shape-rendering="crispEdges"/><line x1="562" y1="233" x2="1018" y2="195" stroke="#fff" stroke-width="2"/><line x1="562" y1="224" x2="568" y2="251" stroke="#fff" stroke-width="2"/><path d="M560 236l5-4l4 1" fill="none" stroke="#fff" stroke-width="1.2"/><line x1="1016" y1="194" x2="1023" y2="213" stroke="#fff" stroke-width="2"/><line x1="1150" y1="246" x2="1362" y2="227" stroke="#fff" stroke-width="2"/><line x1="1362" y1="227" x2="1365" y2="236" stroke="#fff" stroke-width="1.5"/><path d="M1357 223l5 4" stroke="#fff" stroke-width="1.2"/><line x1="1184" y1="402" x2="1366" y2="386" stroke="#fff" stroke-width="2"/><polygon points="216.5,207.0 215.3,212.4 211.8,216.8 206.8,219.2 201.2,219.2 196.2,216.8 192.7,212.4 191.5,207.0 192.7,201.6 196.2,197.2 201.2,194.8 206.8,194.8 211.8,197.2 215.3,201.6" fill="none" stroke="#00a000" stroke-width="1"/><text x="204" y="213" text-anchor="middle" font-size="16" fill="#c4c4c4" font-weight="bold" transform="translate(204,207) scale(0.78,1) translate(-204,-207)" font-family="Liberation Sans">3</text><polygon points="450.5,207.0 449.3,212.4 445.8,216.8 440.8,219.2 435.2,219.2 430.2,216.8 426.7,212.4 425.5,207.0 426.7,201.6 430.2,197.2 435.2,194.8 440.8,194.8 445.8,197.2 449.3,201.6" fill="none" stroke="#00a000" stroke-width="1"/><text x="438" y="213" text-anchor="middle" font-size="16" fill="#c4c4c4" font-weight="bold" transform="translate(438,207) scale(0.78,1) translate(-438,-207)" font-family="Liberation Sans">4</text><polygon points="918.5,207.0 917.3,212.4 913.8,216.8 908.8,219.2 903.2,219.2 898.2,216.8 894.7,212.4 893.5,207.0 894.7,201.6 898.2,197.2 903.2,194.8 908.8,194.8 913.8,197.2 917.3,201.6" fill="none" stroke="#00a000" stroke-width="1"/><text x="906" y="213" text-anchor="middle" font-size="16" fill="#c4c4c4" font-weight="bold" transform="translate(906,207) scale(0.78,1) translate(-906,-207)" font-family="Liberation Sans">5</text><polygon points="1153.5,207.0 1152.3,212.4 1148.8,216.8 1143.8,219.2 1138.2,219.2 1133.2,216.8 1129.7,212.4 1128.5,207.0 1129.7,201.6 1133.2,197.2 1138.2,194.8 1143.8,194.8 1148.8,197.2 1152.3,201.6" fill="none" stroke="#00a000" stroke-width="1"/><text x="1141" y="213" text-anchor="middle" font-size="16" fill="#c4c4c4" font-weight="bold" transform="translate(1141,207) scale(0.78,1) translate(-1141,-207)" font-family="Liberation Sans">6</text><polygon points="1389.5,207.0 1388.3,212.4 1384.8,216.8 1379.8,219.2 1374.2,219.2 1369.2,216.8 1365.7,212.4 1364.5,207.0 1365.7,201.6 1369.2,197.2 1374.2,194.8 1379.8,194.8 1384.8,197.2 1388.3,201.6" fill="none" stroke="#00a000" stroke-width="1"/><polygon points="534.5,460.0 533.3,465.4 529.8,469.8 524.8,472.2 519.2,472.2 514.2,469.8 510.7,465.4 509.5,460.0 510.7,454.6 514.2,450.2 519.2,447.8 524.8,447.8 529.8,450.2 533.3,454.6" fill="none" stroke="#00a000" stroke-width="1"/><text x="522" y="466" text-anchor="middle" font-size="14" fill="#c4c4c4" font-weight="bold" transform="translate(522,460) scale(0.78,1) translate(-522,-460)" font-family="Liberation Sans">A1</text><circle cx="767" cy="332" r="124" fill="none" stroke="#dcdcdc" stroke-width="1"/><circle cx="643" cy="333" r="8" fill="none" stroke="#dcdcdc" stroke-width="1"/><circle cx="891" cy="333" r="8" fill="none" stroke="#dcdcdc" stroke-width="1"/><circle cx="767" cy="208" r="8" fill="none" stroke="#dcdcdc" stroke-width="1"/><circle cx="767" cy="457" r="8" fill="none" stroke="#dcdcdc" stroke-width="1"/><text x="773" y="210" font-size="14" fill="#e0e0e0" font-family="Liberation Sans" transform="translate(773,210) scale(0.92,1) translate(-773,-210)">6500</text><text x="0" y="0" font-size="13" fill="#ccc" font-family="Liberation Sans" transform="translate(1372,323) rotate(-90)">2700</text><line x1="170" y1="405.7" x2="250" y2="398.5" stroke="#ffff00" stroke-width="2"/><line x1="250" y1="396" x2="250" y2="400" stroke="#ffff00" stroke-width="1.5"/><path d="M224 423q-3-10-2-25q0-3 2-5" fill="none" stroke="#00e000" stroke-width="2"/><line x1="225" y1="423" x2="225" y2="391" stroke="#1e90ff" stroke-width="3"/><path d="M220.5 393l4.5-9l4.5 9z" fill="#1e90ff"/><path d="M225 421.5l38-3.5l0-3l11 3.5l-10.5 5.5l0-3l-38 3.5z" fill="#ff1a1a"/><text x="210" y="390" font-size="14" fill="#1e90ff" font-family="Liberation Sans">Z</text><text x="229" y="400" font-size="11" fill="#00d000" font-family="Liberation Sans">Y</text><path d="M259.5 404.5l9.5 9.5M269 404.5l-9.5 9.5" stroke="#ff2020" stroke-width="1"/></svg>
<div class="a" style="left:166px;top:473px;width:1200px;height:33px;background:#f0f0f0"></div>
<div class="a" style="left:382px;top:475px;width:679px;height:26px;background:linear-gradient(#fbfbfb,#f3f3f3 60%,#ededed);border-radius:3px"></div>
<div class="a" style="left:385px;top:481px;width:2px;height:2px;background:#b0b0b0"></div>
<div class="a" style="left:385px;top:485px;width:2px;height:2px;background:#b0b0b0"></div>
<div class="a" style="left:385px;top:489px;width:2px;height:2px;background:#b0b0b0"></div>
<div class="a" style="left:385px;top:493px;width:2px;height:2px;background:#b0b0b0"></div>
<div class="a" style="left:440px;top:477px;width:51px;height:22px;background:#dcebf8;border:1px solid #3c8ad8"></div>
<div class="a" style="left:490px;top:477px;width:52px;height:22px;background:#dcebf8;border:1px solid #3c8ad8"></div>
<svg class="a" style="left:392px;top:480px;" width="15" height="15" viewBox="0 0 15 15"><path d="M1 1l13 13M14 1L1 14" stroke="#2a4fa0" stroke-width="1.6"/></svg>
<div class="a t" style="left:411px;top:480px;font-size:12px;color:#000;">交点</div>
<svg class="a" style="left:443px;top:480px;" width="16" height="15" viewBox="0 0 16 15"><path d="M1 14h14M9 1v13" stroke="#2a4fa0" stroke-width="1.4"/><circle cx="9" cy="14" r="1.6" fill="#2a4fa0"/></svg>
<div class="a t" style="left:463px;top:480px;font-size:12px;color:#000;">垂点</div>
<svg class="a" style="left:494px;top:484px;" width="16" height="6" viewBox="0 0 16 6"><path d="M0 3h16" stroke="#2a4fa0" stroke-width="1.3"/><rect x="6" y="0.5" width="5" height="5" fill="#1a3a8a"/></svg>
<div class="a t" style="left:514px;top:480px;font-size:12px;color:#000;">中点</div>
<svg class="a" style="left:546px;top:480px;" width="15" height="15" viewBox="0 0 15 15"><path d="M7.5 1l6.5 5l-2.5 8h-8l-2.5-8z" fill="none" stroke="#2a4fa0" stroke-width="1.4"/></svg>
<div class="a t" style="left:565px;top:480px;font-size:12px;color:#000;">顶点</div>
<svg class="a" style="left:596px;top:480px;" width="16" height="16" viewBox="0 0 16 16"><path d="M3 2v12h12" stroke="#2a4fa0" stroke-width="1.3" fill="none"/><path d="M3 14l10-10" stroke="#2a4fa0" stroke-dasharray="2 1"/><circle cx="3" cy="2" r="1.5" fill="#2a4fa0"/><circle cx="13" cy="3" r="1.5" fill="#2a4fa0"/></svg>
<div class="a t" style="left:616px;top:480px;font-size:12px;color:#000;">坐标</div>
<div class="a" style="left:650px;top:481px;width:2px;height:2px;background:#b0b0b0"></div>
<div class="a" style="left:650px;top:485px;width:2px;height:2px;background:#b0b0b0"></div>
<div class="a" style="left:650px;top:489px;width:2px;height:2px;background:#b0b0b0"></div>
<div class="a" style="left:650px;top:493px;width:2px;height:2px;background:#b0b0b0"></div>
<div class="a" style="left:655px;top:477px;width:58px;height:22px;background:#fff"></div>
<div class="a" style="left:701px;top:478px;width:11px;height:20px;background:#f0f0f0"></div>
<svg class="a" style="left:703px;top:487px;" width="6" height="4" viewBox="0 0 6 4"><path d="M0 0.5h6L3 3.5z" fill="#111"/></svg>
<div class="a t" style="left:657px;top:480px;font-size:12px;color:#000;">不偏移</div>
<div class="a" style="left:716px;top:480px;width:1px;height:18px;background:#c5c5c5"></div>
<div class="a t" style="left:720px;top:480px;font-size:12px;color:#888;">X=</div>
<div class="a" style="left:739px;top:477px;width:57px;height:22px;background:#f4f4f4;border:1px solid #9a9a9a"></div>
<div class="a t" style="left:769.5px;top:480px;font-size:12px;color:#666;">0</div>
<svg class="a" style="left:786px;top:480px;" width="7" height="15" viewBox="0 0 7 15"><path d="M1 5l2.5-3l2.5 3M1 10l2.5 3l2.5-3" fill="none" stroke="#444"/></svg>
<div class="a" style="left:843px;top:477px;width:57px;height:22px;background:#f4f4f4;border:1px solid #9a9a9a"></div>
<div class="a t" style="left:873.5px;top:480px;font-size:12px;color:#666;">0</div>
<svg class="a" style="left:890px;top:480px;" width="7" height="15" viewBox="0 0 7 15"><path d="M1 5l2.5-3l2.5 3M1 10l2.5 3l2.5-3" fill="none" stroke="#444"/></svg>
<div class="a" style="left:980px;top:477px;width:67px;height:22px;background:#f4f4f4;border:1px solid #9a9a9a"></div>
<div class="a t" style="left:994.5px;top:480px;font-size:12px;color:#666;">0.000</div>
<svg class="a" style="left:1037px;top:480px;" width="7" height="15" viewBox="0 0 7 15"><path d="M1 5l2.5-3l2.5 3M1 10l2.5 3l2.5-3" fill="none" stroke="#444"/></svg>
<div class="a t" style="left:798px;top:480px;font-size:12px;color:#888;">mm Y=</div>
<div class="a t" style="left:902px;top:480px;font-size:12px;color:#888;">mm</div>
<div class="a" style="left:927px;top:480px;width:1px;height:18px;background:#c5c5c5"></div>
<div class="a" style="left:932px;top:482px;width:11px;height:11px;background:#fff;border:1px solid #888"></div>
<div class="a t" style="left:951px;top:480px;font-size:12px;color:#000;">旋转</div>
<div class="a t" style="left:1050px;top:477px;font-size:12px;color:#444;">°</div>
<div class="a" style="left:166px;top:503px;width:1200px;height:205px;background:#f0f0f0"></div>
<div class="a" style="left:164px;top:503px;width:1px;height:205px;background:#a0a0a0"></div>
<svg class="a" style="left:171px;top:507px;" width="11" height="11" viewBox="0 0 11 11"><rect x=".5" y=".5" width="10" height="10" fill="#c08080" stroke="#803030"/><path d="M1 1l9 9M10 1l-9 9" stroke="#fff" stroke-width="1.3"/></svg>
<div class="a" style="left:172px;top:521px;width:2px;height:2px;background:#b8b8b8"></div>
<div class="a" style="left:177px;top:521px;width:2px;height:2px;background:#b8b8b8"></div>
<div class="a" style="left:172px;top:526px;width:2px;height:2px;background:#b8b8b8"></div>
<div class="a" style="left:177px;top:526px;width:2px;height:2px;background:#b8b8b8"></div>
<div class="a" style="left:172px;top:531px;width:2px;height:2px;background:#b8b8b8"></div>
<div class="a" style="left:177px;top:531px;width:2px;height:2px;background:#b8b8b8"></div>
<div class="a" style="left:172px;top:536px;width:2px;height:2px;background:#b8b8b8"></div>
<div class="a" style="left:177px;top:536px;width:2px;height:2px;background:#b8b8b8"></div>
<div class="a" style="left:172px;top:541px;width:2px;height:2px;background:#b8b8b8"></div>
<div class="a" style="left:177px;top:541px;width:2px;height:2px;background:#b8b8b8"></div>
<div class="a" style="left:172px;top:546px;width:2px;height:2px;background:#b8b8b8"></div>
<div class="a" style="left:177px;top:546px;width:2px;height:2px;background:#b8b8b8"></div>
<div class="a" style="left:172px;top:551px;width:2px;height:2px;background:#b8b8b8"></div>
<div class="a" style="left:177px;top:551px;width:2px;height:2px;background:#b8b8b8"></div>
<div class="a" style="left:172px;top:556px;width:2px;height:2px;background:#b8b8b8"></div>
<div class="a" style="left:177px;top:556px;width:2px;height:2px;background:#b8b8b8"></div>
<div class="a" style="left:172px;top:561px;width:2px;height:2px;background:#b8b8b8"></div>
<div class="a" style="left:177px;top:561px;width:2px;height:2px;background:#b8b8b8"></div>
<div class="a" style="left:172px;top:566px;width:2px;height:2px;background:#b8b8b8"></div>
<div class="a" style="left:177px;top:566px;width:2px;height:2px;background:#b8b8b8"></div>
<div class="a" style="left:172px;top:571px;width:2px;height:2px;background:#b8b8b8"></div>
<div class="a" style="left:177px;top:571px;width:2px;height:2px;background:#b8b8b8"></div>
<div class="a" style="left:172px;top:576px;width:2px;height:2px;background:#b8b8b8"></div>
<div class="a" style="left:177px;top:576px;width:2px;height:2px;background:#b8b8b8"></div>
<div class="a" style="left:172px;top:581px;width:2px;height:2px;background:#b8b8b8"></div>
<div class="a" style="left:177px;top:581px;width:2px;height:2px;background:#b8b8b8"></div>
<div class="a" style="left:172px;top:586px;width:2px;height:2px;background:#b8b8b8"></div>
<div class="a" style="left:177px;top:586px;width:2px;height:2px;background:#b8b8b8"></div>
<div class="a" style="left:172px;top:591px;width:2px;height:2px;background:#b8b8b8"></div>
<div class="a" style="left:177px;top:591px;width:2px;height:2px;background:#b8b8b8"></div>
<div class="a" style="left:172px;top:596px;width:2px;height:2px;background:#b8b8b8"></div>
<div class="a" style="left:177px;top:596px;width:2px;height:2px;background:#b8b8b8"></div>
<div class="a" style="left:172px;top:601px;width:2px;height:2px;background:#b8b8b8"></div>
<div class="a" style="left:177px;top:601px;width:2px;height:2px;background:#b8b8b8"></div>
<div class="a" style="left:172px;top:606px;width:2px;height:2px;background:#b8b8b8"></div>
<div class="a" style="left:177px;top:606px;width:2px;height:2px;background:#b8b8b8"></div>
<div class="a" style="left:172px;top:611px;width:2px;height:2px;background:#b8b8b8"></div>
<div class="a" style="left:177px;top:611px;width:2px;height:2px;background:#b8b8b8"></div>
<div class="a" style="left:172px;top:616px;width:2px;height:2px;background:#b8b8b8"></div>
<div class="a" style="left:177px;top:616px;width:2px;height:2px;background:#b8b8b8"></div>
<div class="a" style="left:172px;top:621px;width:2px;height:2px;background:#b8b8b8"></div>
<div class="a" style="left:177px;top:621px;width:2px;height:2px;background:#b8b8b8"></div>
<div class="a" style="left:172px;top:626px;width:2px;height:2px;background:#b8b8b8"></div>
<div class="a" style="left:177px;top:626px;width:2px;height:2px;background:#b8b8b8"></div>
<div class="a" style="left:172px;top:631px;width:2px;height:2px;background:#b8b8b8"></div>
<div class="a" style="left:177px;top:631px;width:2px;height:2px;background:#b8b8b8"></div>
<div class="a" style="left:172px;top:636px;width:2px;height:2px;background:#b8b8b8"></div>
<div class="a" style="left:177px;top:636px;width:2px;height:2px;background:#b8b8b8"></div>
<div class="a" style="left:172px;top:641px;width:2px;height:2px;background:#b8b8b8"></div>
<div class="a" style="left:177px;top:641px;width:2px;height:2px;background:#b8b8b8"></div>
<div class="a" style="left:172px;top:646px;width:2px;height:2px;background:#b8b8b8"></div>
<div class="a" style="left:177px;top:646px;width:2px;height:2px;background:#b8b8b8"></div>
<div class="a" style="left:172px;top:651px;width:2px;height:2px;background:#b8b8b8"></div>
<div class="a" style="left:177px;top:651px;width:2px;height:2px;background:#b8b8b8"></div>
<div class="a" style="left:172px;top:656px;width:2px;height:2px;background:#b8b8b8"></div>
<div class="a" style="left:177px;top:656px;width:2px;height:2px;background:#b8b8b8"></div>
<div class="a" style="left:172px;top:661px;width:2px;height:2px;background:#b8b8b8"></div>
<div class="a" style="left:177px;top:661px;width:2px;height:2px;background:#b8b8b8"></div>
<div class="a" style="left:172px;top:666px;width:2px;height:2px;background:#b8b8b8"></div>
<div class="a" style="left:177px;top:666px;width:2px;height:2px;background:#b8b8b8"></div>
<div class="a" style="left:172px;top:671px;width:2px;height:2px;background:#b8b8b8"></div>
<div class="a" style="left:177px;top:671px;width:2px;height:2px;background:#b8b8b8"></div>
<div class="a" style="left:172px;top:676px;width:2px;height:2px;background:#b8b8b8"></div>
<div class="a" style="left:177px;top:676px;width:2px;height:2px;background:#b8b8b8"></div>
<div class="a" style="left:172px;top:681px;width:2px;height:2px;background:#b8b8b8"></div>
<div class="a" style="left:177px;top:681px;width:2px;height:2px;background:#b8b8b8"></div>
<div class="a" style="left:172px;top:686px;width:2px;height:2px;background:#b8b8b8"></div>
<div class="a" style="left:177px;top:686px;width:2px;height:2px;background:#b8b8b8"></div>
<div class="a" style="left:172px;top:691px;width:2px;height:2px;background:#b8b8b8"></div>
<div class="a" style="left:177px;top:691px;width:2px;height:2px;background:#b8b8b8"></div>
<div class="a" style="left:172px;top:696px;width:2px;height:2px;background:#b8b8b8"></div>
<div class="a" style="left:177px;top:696px;width:2px;height:2px;background:#b8b8b8"></div>
<div class="a" style="left:172px;top:701px;width:2px;height:2px;background:#b8b8b8"></div>
<div class="a" style="left:177px;top:701px;width:2px;height:2px;background:#b8b8b8"></div>
<div class="a" style="left:183px;top:508px;width:1183px;height:24px;background:linear-gradient(#fbfbfb,#f0f0f0)"></div>
<svg class="a" style="left:188px;top:512px;" width="10" height="14" viewBox="0 0 10 14"><path d="M1 1v12" stroke="#bbb" stroke-width="2"/><path d="M9 1v12L3 7z" fill="#ccc"/></svg>
<svg class="a" style="left:215px;top:512px;" width="8" height="14" viewBox="0 0 8 14"><path d="M7 1v12L1 7z" fill="#ccc"/></svg>
<svg class="a" style="left:239px;top:512px;" width="8" height="14" viewBox="0 0 8 14"><path d="M1 1v12L7 7z" fill="#ccc"/></svg>
<svg class="a" style="left:262px;top:512px;" width="10" height="14" viewBox="0 0 10 14"><path d="M9 1v12" stroke="#bbb" stroke-width="2"/><path d="M1 1v12L7 7z" fill="#ccc"/></svg>
<div class="a" style="left:280px;top:513px;width:1px;height:14px;background:#c5c5c5"></div>
<svg class="a" style="left:289px;top:513px;" width="9" height="11" viewBox="0 0 9 11"><path d="M4.5 1l4 4h-2v5h-4v-5h-2z" fill="#ccc"/></svg>
<svg class="a" style="left:312px;top:513px;" width="9" height="11" viewBox="0 0 9 11"><path d="M4.5 10l4-4h-2v-5h-4v5h-2z" fill="#ccc"/></svg>
<div class="a" style="left:331px;top:513px;width:1px;height:14px;background:#c5c5c5"></div>
<svg class="a" style="left:337px;top:512px;" width="17" height="14" viewBox="0 0 17 14"><path d="M1 1h3v4h-3M1 9h3v4h-3M5 7h5M12 5h4v4h-4z" fill="none" stroke="#bbb"/></svg>
<div class="a t" style="left:357px;top:511px;font-size:12px;color:#8c8c8c;">插入</div>
<svg class="a" style="left:387px;top:512px;" width="15" height="14" viewBox="0 0 15 14"><path d="M1 2h8M1 7h10M1 12h8M12 4l3 3l-3 3" fill="none" stroke="#bbb" stroke-width="1.5"/></svg>
<div class="a t" style="left:408px;top:511px;font-size:12px;color:#8c8c8c;">删除</div>
<svg class="a" style="left:440px;top:512px;" width="14" height="15" viewBox="0 0 14 15"><path d="M1 3v11h12M1 3h3M4 6v8M7 8v6M10 10v4M9 1h4v4" fill="none" stroke="#bbb"/></svg>
<div class="a t" style="left:459px;top:511px;font-size:12px;color:#8c8c8c;">缩尺配筋</div>
<svg class="a" style="left:514px;top:512px;" width="15" height="15" viewBox="0 0 15 15"><path d="M2 13l6-11l6 6l-6 6z" fill="#ddd" stroke="#bbb"/></svg>
<div class="a t" style="left:533px;top:511px;font-size:12px;color:#8c8c8c;">钢筋信息</div>
<svg class="a" style="left:589px;top:513px;" width="15" height="13" viewBox="0 0 15 13"><rect x=".5" y=".5" width="14" height="12" fill="#eee" stroke="#bbb"/><path d="M3 4h9M3 8h9" stroke="#ccc"/></svg>
<div class="a t" style="left:608px;top:511px;font-size:12px;color:#8c8c8c;">钢筋图库</div>
<svg class="a" style="left:664px;top:512px;" width="17" height="15" viewBox="0 0 17 15"><rect x=".5" y="1.5" width="11" height="12" fill="#fff" stroke="#3a6ab8"/><path d="M3 5h6M3 8h6M3 11h4" stroke="#3a6ab8"/><path d="M9 8h5v-3l3 4.5l-3 4.5v-3h-5z" fill="#2a6ad8"/></svg>
<div class="a t" style="left:683px;top:511px;font-size:12px;color:#000;">其他</div>
<svg class="a" style="left:711px;top:519px;" width="6" height="4" viewBox="0 0 6 4"><path d="M0 0.5h6L3 3.5z" fill="#111"/></svg>
<div class="a t" style="left:725px;top:511px;font-size:12px;color:#000;">关闭</div>
<div class="a" style="left:758px;top:513px;width:1px;height:16px;background:#c5c5c5"></div>
<div class="a t" style="left:764px;top:511px;font-size:12px;color:#000;">单构件钢筋总重(kg)：0</div>
<div class="a" style="left:182px;top:533px;width:1182px;height:172px;background:#fff;border:1px solid #a0a0a0"></div>
<div class="a" style="left:183px;top:534px;width:1180px;height:19px;background:linear-gradient(#fafafa,#ececec)"></div>
<div class="a" style="left:217px;top:534px;width:72px;height:19px;background:linear-gradient(#f9dca0,#f0c070)"></div>
<div class="a" style="left:183px;top:554px;width:34px;height:18px;background:#fcd898"></div>
<div class="a" style="left:217px;top:554px;width:72px;height:18px;background:#d8e8f8"></div>
<div class="a" style="left:217px;top:534px;width:1px;height:39px;background:#c8c8c8"></div>
<div class="a t" style="left:217px;top:536px;width:72px;text-align:center;font-size:12px;color:#5a1a5a">筋号</div>
<div class="a" style="left:289px;top:534px;width:1px;height:39px;background:#c8c8c8"></div>
<div class="a t" style="left:289px;top:536px;width:56px;text-align:center;font-size:12px;color:#000">直径<span style="font-family:Liberation Mono;font-size:11px;letter-spacing:-0.8px">(mm)</span></div>
<div class="a" style="left:345px;top:534px;width:1px;height:39px;background:#c8c8c8"></div>
<div class="a t" style="left:345px;top:536px;width:36px;text-align:center;font-size:12px;color:#000">级别</div>
<div class="a" style="left:381px;top:534px;width:1px;height:39px;background:#c8c8c8"></div>
<div class="a t" style="left:381px;top:536px;width:33px;text-align:center;font-size:12px;color:#000">图号</div>
<div class="a" style="left:414px;top:534px;width:1px;height:39px;background:#c8c8c8"></div>
<div class="a t" style="left:414px;top:536px;width:212px;text-align:center;font-size:12px;color:#000">图形</div>
<div class="a" style="left:626px;top:534px;width:1px;height:39px;background:#c8c8c8"></div>
<div class="a t" style="left:626px;top:536px;width:165px;text-align:center;font-size:12px;color:#000">计算公式</div>
<div class="a" style="left:791px;top:534px;width:1px;height:39px;background:#c8c8c8"></div>
<div class="a t" style="left:791px;top:536px;width:156px;text-align:center;font-size:12px;color:#000">公式描述</div>
<div class="a" style="left:947px;top:534px;width:1px;height:39px;background:#c8c8c8"></div>
<div class="a t" style="left:947px;top:536px;width:62px;text-align:center;font-size:12px;color:#000">长度<span style="font-family:Liberation Mono;font-size:11px;letter-spacing:-0.8px">(mm)</span></div>
<div class="a" style="left:1009px;top:534px;width:1px;height:39px;background:#c8c8c8"></div>
<div class="a t" style="left:1009px;top:536px;width:37px;text-align:center;font-size:12px;color:#000">根数</div>
<div class="a" style="left:1046px;top:534px;width:1px;height:39px;background:#c8c8c8"></div>
<div class="a t" style="left:1046px;top:536px;width:39px;text-align:center;font-size:12px;color:#000">搭接</div>
<div class="a" style="left:1085px;top:534px;width:1px;height:39px;background:#c8c8c8"></div>
<div class="a t" style="left:1085px;top:536px;width:49px;text-align:center;font-size:12px;color:#000">损耗<span style="font-family:Liberation Mono;font-size:11px;letter-spacing:-0.8px">(%)</span></div>
<div class="a" style="left:1134px;top:534px;width:1px;height:39px;background:#c8c8c8"></div>
<div class="a t" style="left:1134px;top:536px;width:61px;text-align:center;font-size:12px;color:#000">单重<span style="font-family:Liberation Mono;font-size:11px;letter-spacing:-0.8px">(kg)</span></div>
<div class="a" style="left:1195px;top:534px;width:1px;height:39px;background:#c8c8c8"></div>
<div class="a t" style="left:1195px;top:536px;width:61px;text-align:center;font-size:12px;color:#000">总重<span style="font-family:Liberation Mono;font-size:11px;letter-spacing:-0.8px">(kg)</span></div>
<div class="a" style="left:1256px;top:534px;width:1px;height:39px;background:#c8c8c8"></div>
<div class="a t" style="left:1256px;top:536px;width:71px;text-align:center;font-size:12px;color:#000">钢筋归类</div>
<div class="a" style="left:1327px;top:534px;width:1px;height:39px;background:#c8c8c8"></div>
<div class="a t" style="left:1340px;top:536px;font-size:12px;color:#000;">搭接</div>
<div class="a" style="left:183px;top:553px;width:1180px;height:1px;background:#c8c8c8"></div>
<div class="a" style="left:183px;top:572px;width:1180px;height:1px;background:#c0c0c0"></div>
<div class="a" style="left:289px;top:554px;width:2px;height:18px;background:#000"></div>
<div class="a t" style="left:192px;top:555px;font-size:12px;color:#4a1a6a;">1*</div>
<div class="a" style="left:183px;top:688px;width:1180px;height:16px;background:#f0f0f0"></div>
<div class="a" style="left:201px;top:689px;width:823px;height:14px;background:#cdcdcd"></div>
<svg class="a" style="left:187px;top:691px;" width="6" height="10" viewBox="0 0 6 10"><path d="M5 1l-4 4l4 4" stroke="#555" stroke-width="1.6" fill="none"/></svg>
<svg class="a" style="left:1351px;top:691px;" width="6" height="10" viewBox="0 0 6 10"><path d="M1 1l4 4l-4 4" stroke="#555" stroke-width="1.6" fill="none"/></svg>
<div class="a" style="left:0px;top:707px;width:1366px;height:21px;background:#f0f0f0;border-top:1px solid #d8d8d8"></div>
<div class="a" style="left:0px;top:709px;width:148px;height:19px;background:#f4f4f4;border:1px solid #dcdcdc"></div>
<div class="a" style="left:150px;top:709px;width:77px;height:19px;background:#f4f4f4;border:1px solid #dcdcdc"></div>
<div class="a" style="left:229px;top:709px;width:97px;height:19px;background:#f4f4f4;border:1px solid #dcdcdc"></div>
<div class="a" style="left:329px;top:709px;width:48px;height:19px;background:#f4f4f4;border:1px solid #dcdcdc"></div>
<div class="a" style="left:380px;top:709px;width:912px;height:19px;background:#f4f4f4;border:1px solid #dcdcdc"></div>
<div class="a" style="left:1295px;top:709px;width:71px;height:19px;background:#f4f4f4;border:1px solid #dcdcdc"></div>
<div class="a t" style="left:2px;top:711px;font-size:10px;color:#000;font-family:'Liberation Mono',monospace">X=356878 Y=11414</div>
<div class="a t" style="left:151px;top:711px;font-size:12px;color:#000;">层高:<span style="font-family:Liberation Mono;font-size:10px">2.15m</span></div>
<div class="a t" style="left:231px;top:711px;font-size:12px;color:#000;">底标高:<span style="font-family:Liberation Mono;font-size:10px">-2.2m</span></div>
<div class="a t" style="left:331px;top:711px;font-size:10px;color:#000;font-family:'Liberation Mono',monospace">0</div>
<div class="a t" style="left:1297px;top:711px;font-size:10px;color:#000;font-family:'Liberation Mono',monospace">272.4 FPS</div>
<div class="a" style="left:0px;top:728px;width:1366px;height:40px;background:#0b161a"></div>
<div class="a" style="left:0px;top:728px;width:48px;height:40px;background:#000"></div>
<svg class="a" style="left:16px;top:741px;" width="16" height="15" viewBox="0 0 16 15"><path d="M0 2l7-1v6H0zM8 1l8-1v7H8zM0 8h7v6l-7-1zM8 8h8v7l-8-1z" fill="#fff"/></svg>
<div class="a" style="left:48px;top:728px;width:344px;height:40px;background:#f2f2f2"></div>
<svg class="a" style="left:57px;top:738px;" width="20" height="20" viewBox="0 0 20 20"><circle cx="10" cy="10" r="8.2" fill="none" stroke="#111" stroke-width="2.6"/></svg>
<div class="a t" style="left:88px;top:740px;font-size:13.5px;color:#333;">在这里输入你要搜索的内容</div>
<svg class="a" style="left:365px;top:739px;" width="11" height="18" viewBox="0 0 11 18"><rect x="2.5" y="0.5" width="6" height="11" rx="3" fill="none" stroke="#333"/><path d="M0.5 8q0 5 5 5q5 0 5-5M5.5 13v4M2 17h7" fill="none" stroke="#333"/></svg>
<svg class="a" style="left:408px;top:739px;" width="17" height="17" viewBox="0 0 17 17"><path d="M0 1.5h11M0 15.5h11M1.5 1.5v2M9.5 1.5v2M1.5 15.5v-2M9.5 15.5v-2" stroke="#fff" stroke-width="1.2" fill="none"/><rect x="1.5" y="5" width="8" height="7" fill="none" stroke="#fff" stroke-width="1.2"/><rect x="13" y="4" width="3" height="3" fill="#fff"/><path d="M14.5 1v2M14.5 8v8" stroke="#fff" stroke-width="1.2"/></svg>
<svg class="a" style="left:456px;top:738px;" width="21" height="21" viewBox="0 0 21 21"><g fill="#e6e6e6"><path d="M10 10C4 11 0 9 0 5C0 1 4 0 6 .5C10 1.5 10.5 6 10 10z"/><path d="M11 10C10 4 12 0 16 0C20 0 21 4 20.5 6C19.5 10 15 10.5 11 10z"/><path d="M11 11C17 10 21 12 21 16C21 20 17 21 15 20.5C11 19.5 10.5 15 11 11z"/><path d="M10 11C11 17 9 21 5 21C1 21 0 17 .5 15C1.5 11 6 10.5 10 11z"/></g></svg>
<svg class="a" style="left:507px;top:737px;" width="22" height="23" viewBox="0 0 22 23"><path d="M5 12.5h14q0-7.5-7-7.5q-7 0-7.5 7.5q0 7.5 7.5 7.5q4.5 0 6.5-3" fill="none" stroke="#eee" stroke-width="3.2"/><path d="M4 20q-5 3-2-4q4-8 12-12q8-4 6 3" fill="none" stroke="#eee" stroke-width="1.3"/></svg>
<svg class="a" style="left:557px;top:732px;" width="30" height="28" viewBox="0 0 30 28"><path d="M11 22q-8 0-9-7q0-8 8-9q6 0 7 5q0 5-4 5q-4 0-4-3q0-2 2-2" fill="none" stroke="#ddd" stroke-width="1.4"/><path d="M6 19q5 5 11 1" fill="none" stroke="#ddd" stroke-width="1.2"/><path d="M22 1q5 0 5 6v4l2 3h-14l2-3V7q0-6 5-6z" fill="#e8a818"/><circle cx="22" cy="15.5" r="1.8" fill="#e8a818"/></svg>
<div class="a" style="left:600px;top:740px;width:1px;height:16px;background:#666"></div>
<div class="a" style="left:603px;top:740px;width:1px;height:16px;background:#666"></div>
<svg class="a" style="left:628px;top:736px;" width="25" height="24" viewBox="0 0 25 24"><defs><linearGradient id="gg" x1="0" y1="0" x2="1" y2="1"><stop offset="0" stop-color="#5ac8ff"/><stop offset="1" stop-color="#1a6ad8"/></linearGradient></defs><path d="M24 3q-3 2-6 0q-5-3-11 0q-7 5-5 13q2 7 9 8q7 0 9-6q1-5-4-6h-5l1 4h4q0 3-4 3q-5 0-6-5q-1-6 4-9q4-2 8 0q3 2 6-2z" fill="url(#gg)"/></svg>
<svg class="a" style="left:678px;top:736px;" width="24" height="24" viewBox="0 0 24 24"><defs><linearGradient id="gl" x1="0" y1="0" x2="1" y2="1"><stop offset="0" stop-color="#22a0f8"/><stop offset="1" stop-color="#0a70d8"/></linearGradient></defs><rect x="0" y="0" width="24" height="24" rx="4" fill="url(#gl)"/><g transform="scale(1.5)"><path d="M7.3 13V4.2q0-1.6 1.2-1.4q.9.2.9 1.3M7.3 12.5q0 1.2 1 1.1q.9-.1 1-1M2.5 7.6h10.2M2.5 7.6q.3-1.3 1.6-1.5M12.7 7.6q0-1.2-1.2-1.5" fill="none" stroke="#fff" stroke-width="1.2" stroke-linecap="round"/></g></svg>
<svg class="a" style="left:727px;top:736px;" width="24" height="24" viewBox="0 0 24 24"><rect x="0" y="0" width="24" height="24" rx="3" fill="#f0a818"/><rect x="2" y="2" width="20" height="20" rx="2" fill="#f8c848"/><path d="M3 9l12-3l4 13l-12 3z" fill="#fff6d8" stroke="#c88a30" stroke-width=".8"/><path d="M6 11l7-2M7 14l7-2M8 17l5-1.5" stroke="#8a6a40" stroke-width=".9"/><path d="M13 16l8-13" stroke="#c8501a" stroke-width="2"/></svg>
<div class="a" style="left:621px;top:766px;width:40px;height:2px;background:#6ab4f0"></div>
<div class="a" style="left:670px;top:766px;width:40px;height:2px;background:#6ab4f0"></div>
<div class="a" style="left:719px;top:766px;width:40px;height:2px;background:#6ab4f0"></div>
<div class="a" style="left:830px;top:728px;width:17px;height:40px;background:#eaeaea"></div>
<svg class="a" style="left:834px;top:735px;" width="10" height="26" viewBox="0 0 10 26"><path d="M1 6l4-4l4 4M1 20l4 4l4-4" fill="none" stroke="#444" stroke-width="1.4"/></svg>
<div class="a" style="left:859px;top:740px;width:1px;height:16px;background:#666"></div>
<div class="a" style="left:862px;top:740px;width:1px;height:16px;background:#666"></div>
<div class="a t" style="left:873px;top:739px;font-size:13px;color:#e8e8e8;">链接</div>
<svg class="a" style="left:922px;top:740px;" width="15" height="15" viewBox="0 0 15 15"><circle cx="5" cy="8" r="2.6" fill="none" stroke="#eee" stroke-width="1.2"/><path d="M.5 15q.5-4 4.5-4q4 0 4.5 4" fill="none" stroke="#eee" stroke-width="1.2"/><circle cx="11" cy="3.5" r="2.6" fill="none" stroke="#eee" stroke-width="1.2"/><path d="M7.5 8q1-2 3.5-2q3.5 0 4 4.5" fill="none" stroke="#eee" stroke-width="1.2"/></svg>
<div class="a t" style="left:980px;top:731px;font-size:13px;color:#e8e8e8;">29%</div>
<div class="a t" style="left:968px;top:748px;font-size:12px;color:#e8e8e8;">CPU使用</div>
<svg class="a" style="left:1036px;top:743px;" width="13" height="8" viewBox="0 0 13 8"><path d="M1 7l5.5-6l5.5 6" fill="none" stroke="#eee" stroke-width="1.3"/></svg>
<svg class="a" style="left:1059px;top:740px;" width="14" height="16" viewBox="0 0 14 16"><path d="M7 1q5 0 5 5v5l2 2H0l2-2V6q0-5 5-5z" fill="#eee"/><circle cx="7" cy="14.5" r="1.6" fill="#eee"/></svg>
<svg class="a" style="left:1081px;top:741px;" width="20" height="14" viewBox="0 0 20 14"><rect x="6.5" y="3.5" width="11" height="8" fill="none" stroke="#eee" stroke-width="1.2"/><path d="M18 6v3M1 2v3q0 2 2 2h3M3 1v2M5 1v2" stroke="#eee" stroke-width="1.2" fill="none"/></svg>
<svg class="a" style="left:1108px;top:742px;" width="14" height="13" viewBox="0 0 14 13"><path d="M1 12A11 11 0 0 1 12 1M3.5 12A8.5 8.5 0 0 1 12 3.5M6 12A6 6 0 0 1 12 6M8.5 12A3.5 3.5 0 0 1 12 8.5" fill="none" stroke="#ccc" stroke-width="1"/><circle cx="11" cy="11" r="1.6" fill="#eee"/></svg>
<svg class="a" style="left:1130px;top:741px;" width="17" height="14" viewBox="0 0 17 14"><path d="M1 4.5h3l4.5-4v13l-4.5-4H1z" fill="none" stroke="#eee" stroke-width="1.2"/><path d="M11 4q2 3 0 6M13.5 2q3.5 5 0 10" fill="none" stroke="#eee" stroke-width="1.1"/><path d="M15.5 1q4 6 0 12" fill="none" stroke="#777" stroke-width="1"/></svg>
<svg class="a" style="left:1154px;top:741px;" width="24" height="13" viewBox="0 0 24 13"><rect x=".5" y=".5" width="23" height="12" rx="1" fill="none" stroke="#eee" stroke-width="1.2"/><path d="M3 3.5h18M3 6.5h18" stroke="#eee" stroke-dasharray="1.2 .8"/><path d="M6 9.5h12" stroke="#eee"/></svg>
<div class="a t" style="left:1186px;top:739px;font-size:15px;color:#e8e8e8;">中</div>
<svg class="a" style="left:1213px;top:739px;" width="18" height="17" viewBox="0 0 18 17"><path d="M3 1.5l13-1.5l1.5 13l-13 3.5z" fill="#e8481a" transform="rotate(-3 9 9)"/><path d="M12.5 5q-3-1.5-5 0q-2 2 1 3q3 1 1.5 3q-2 1.5-5 0" fill="none" stroke="#fff" stroke-width="2.2"/></svg>
<div class="a t" style="left:1262px;top:730px;font-size:13px;color:#e8e8e8;">15:18</div>
<div class="a t" style="left:1250px;top:749px;font-size:13px;color:#e8e8e8;">2018/9/5</div>
<svg class="a" style="left:1324px;top:739px;" width="26" height="26" viewBox="0 0 26 26"><path d="M1 1h17v12H9l-3 3v-3H1z" fill="#eee"/><path d="M4 4.5h11M4 7.5h11M4 10.5h7" stroke="#0b161a" stroke-width="1.2"/><circle cx="16.5" cy="16" r="8" fill="#333" stroke="#999" stroke-width="1.3"/><text x="16.5" y="20.5" text-anchor="middle" font-size="12" font-weight="bold" fill="#fff" font-family="Liberation Sans">3</text></svg>
<div class="a" style="left:1361px;top:728px;width:1px;height:40px;background:#555"></div>
</body></html>
